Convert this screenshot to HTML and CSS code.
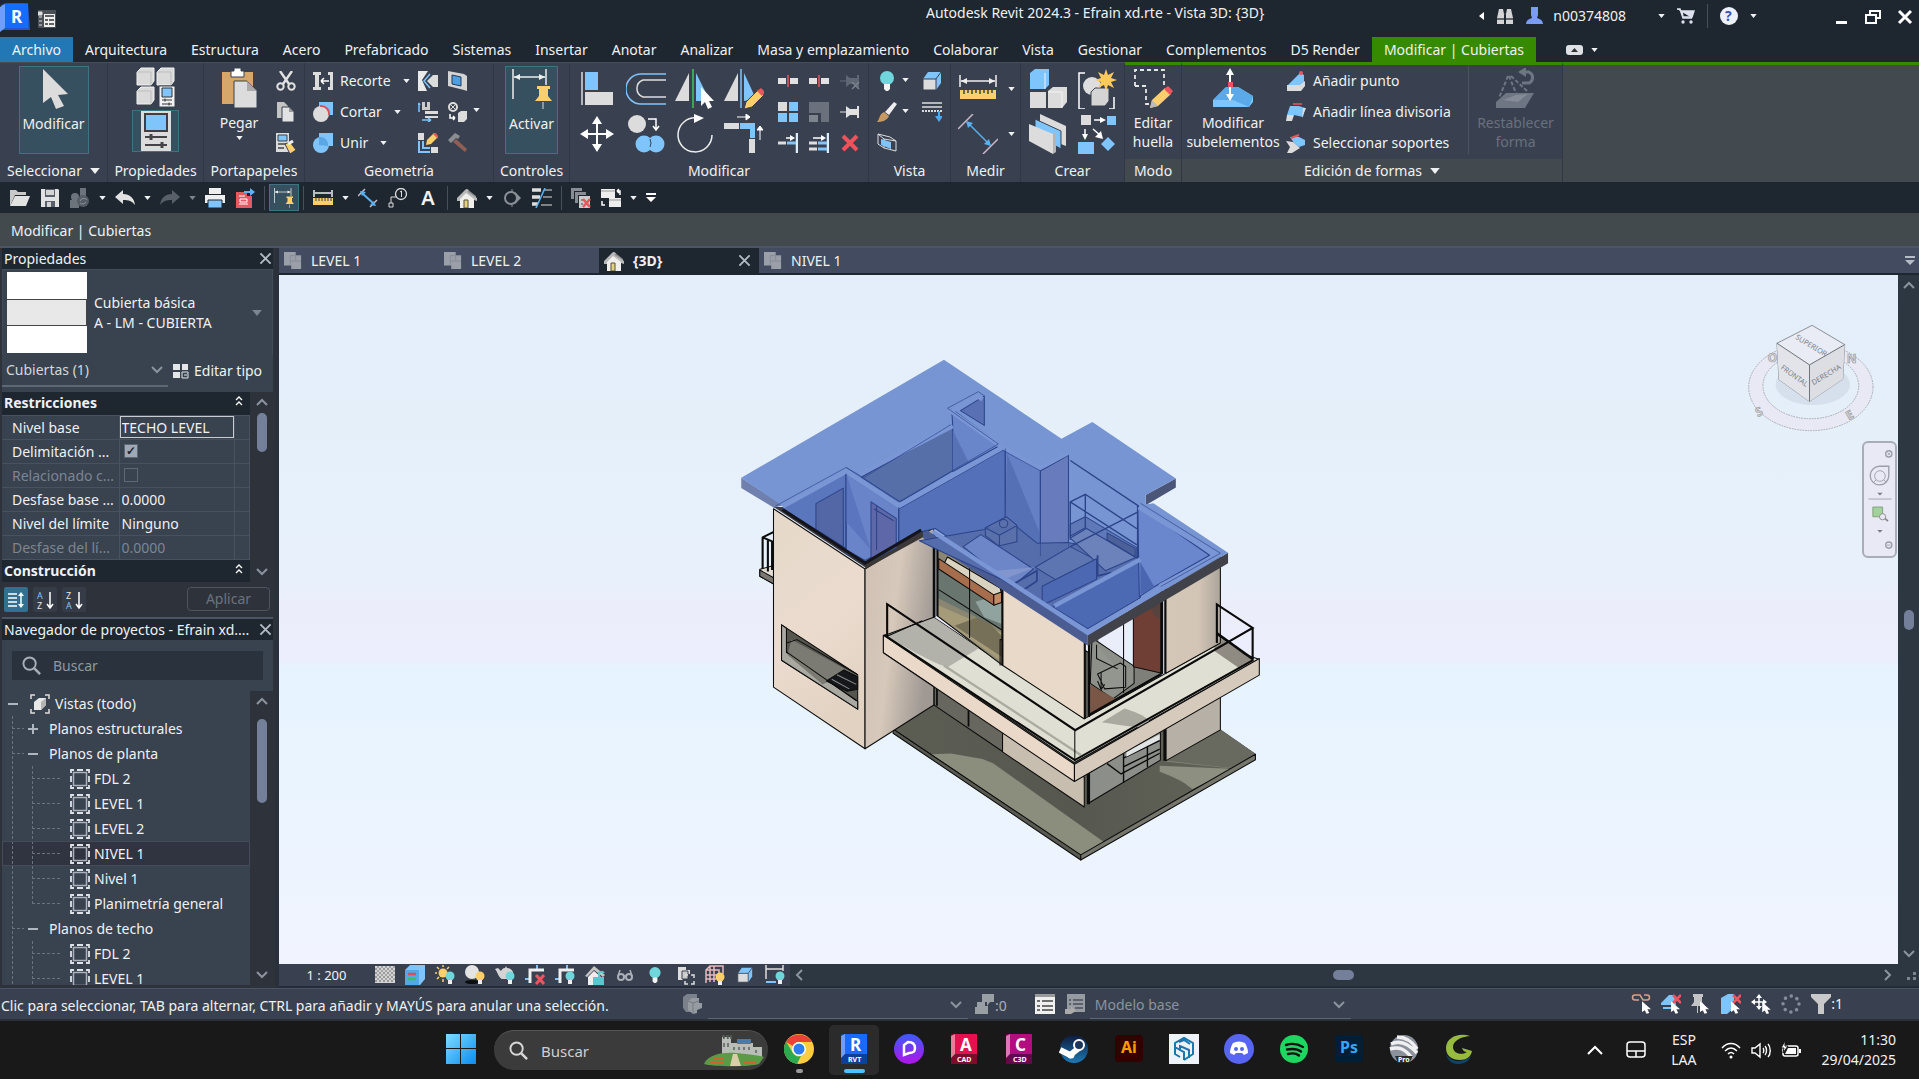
FILE: index.html
```html
<!DOCTYPE html>
<html lang="es">
<head>
    <meta charset="UTF-8">
    <meta name="viewport" content="width=device-width, initial-scale=1.0">
    <title>Autodesk Revit 2024.3 - Efrain xd.rte - Vista 3D: {3D}</title>
    <link rel="stylesheet" href="styles.css">
</head>
<body>
    <!-- Icon sprite -->
    <svg class="sprite" aria-hidden="true">
        <defs>
            <linearGradient id="winGrad" x1="0" y1="0" x2="1" y2="1"><stop offset="0" stop-color="#7fdcff"/><stop offset="1" stop-color="#0a8cf0"/></linearGradient>
            <linearGradient id="d5Grad" x1="0" y1="0" x2="0" y2="1"><stop offset="0" stop-color="#3b5bff"/><stop offset="1" stop-color="#b312e8"/></linearGradient>
            <linearGradient id="steamGrad" x1="0" y1="0" x2="0" y2="1"><stop offset="0" stop-color="#0e1a3c"/><stop offset="1" stop-color="#1c79b4"/></linearGradient>
            <symbol id="caret" viewBox="0 0 8 5"><path d="M0 0h8L4 5z" fill="currentColor"/></symbol>
            <symbol id="close" viewBox="0 0 14 14"><path d="M1.5 1.5l11 11M12.5 1.5l-11 11" stroke="currentColor" stroke-width="2" fill="none"/></symbol>
            <symbol id="chev-up" viewBox="0 0 12 8"><path d="M1 7l5-5 5 5" stroke="currentColor" stroke-width="2" fill="none"/></symbol>
            <symbol id="chev-down" viewBox="0 0 12 8"><path d="M1 1l5 5 5-5" stroke="currentColor" stroke-width="2" fill="none"/></symbol>
            <symbol id="chev-left" viewBox="0 0 8 12"><path d="M7 1L2 6l5 5" stroke="currentColor" stroke-width="2" fill="none"/></symbol>
            <symbol id="chev-right" viewBox="0 0 8 12"><path d="M1 1l5 5-5 5" stroke="currentColor" stroke-width="2" fill="none"/></symbol>
            <symbol id="dblchev" viewBox="0 0 8 10"><path d="M1 4l3-3 3 3M1 9l3-3 3 3" stroke="#fff" stroke-width="1.3" fill="none"/></symbol>
            <symbol id="magnifier" viewBox="0 0 20 20"><circle cx="8" cy="8" r="6.5" stroke="currentColor" stroke-width="2" fill="none"/><path d="M13 13l6 6" stroke="currentColor" stroke-width="2.6"/></symbol>

            <symbol id="arrow" viewBox="0 0 40 40"><path d="M9 0v34l8-6 5 12 8-3-6-11 10-1z" fill="#dcdcdc"/></symbol>
            <symbol id="types" viewBox="0 0 40 40"><g fill="#dadada" stroke="#f2f2f2" stroke-width="1"><path d="M1 5l4-4h13v13l-3 4H1zM21 5l4-4h13v13l-3 4H21zM1 24l4-4h13v13l-3 4H1z"/></g><path d="M15 5v13M1 5h14M35 5v13M21 5h14M15 24v13M1 24h14" stroke="#bdbdbd" fill="none"/><path d="M23 19h16v21H23z" fill="#f1f1f1" stroke="#394150"/><path d="M26 21h10v9H26z" fill="#7fc4fb" stroke="#333"/><path d="M26 33h10M26 37h10M29 31.500v3M33 35.500v3" stroke="#333"/></symbol>
            <symbol id="props" viewBox="0 0 40 40"><path d="M5 0h30v40H5z" fill="#dcdcdc"/><path d="M9 3h22v17H9z" fill="#7fc4fb" stroke="#394150" stroke-width="2"/><path d="M9 26h22M9 34h22" stroke="#444" stroke-width="2"/><path d="M15 23v6M26 31v6" stroke="#444" stroke-width="3"/></symbol>
            <symbol id="paste" viewBox="0 0 40 40"><path d="M3 4h31v32H3z" fill="#d5a76b"/><path d="M12 9V3h3V0h7v3h3v6z" fill="#fff" stroke="#394150"/><path d="M15 13h13l10 10v17H15z" fill="#dcdcdc" stroke="#394150"/><path d="M28 13v10h10z" fill="#aaa"/></symbol>
            <symbol id="cut" viewBox="0 0 20 20"><path d="M4 0l9 13M16 0L7 13" stroke="#e2e2e2" stroke-width="2.400"/><circle cx="4.500" cy="15.500" r="3.200" stroke="#e2e2e2" stroke-width="2" fill="none"/><circle cx="15.500" cy="15.500" r="3.200" stroke="#e2e2e2" stroke-width="2" fill="none"/></symbol>
            <symbol id="copy" viewBox="0 0 20 20"><path d="M1 0h7l4 4v12H1z" fill="#c4c4c4"/><path d="M6 5h7l5 5v10H6z" fill="#e2e2e2" stroke="#394150"/><path d="M13 5v5h5z" fill="#999"/></symbol>
            <symbol id="match" viewBox="0 0 20 20"><path d="M0 0h13v19H0z" fill="#dcdcdc"/><path d="M2 2h9v6H2z" fill="#7fc4fb" stroke="#394150"/><path d="M2 11h9M2 15h6" stroke="#444" stroke-width="1.500"/><path d="M9 11l5-2 6 8-6 4z" fill="#ffcf6b" stroke="#394150"/><path d="M12 11l5-3" stroke="#eee" stroke-width="3"/></symbol>
            <symbol id="cope" viewBox="0 0 20 20"><path d="M0 1h8v3H6v12h2v3H0v-3h2V4H0zM15 1h5v18h-5v-3h2V4h-2z" fill="#dcdcdc"/><path d="M8 10h8M8 10l3-3M8 10l3 3" stroke="#fff" stroke-width="1.500" fill="none"/></symbol>
            <symbol id="cutgeo" viewBox="0 0 20 20"><path d="M6 0h14v13H6z" fill="#7fc4fb"/><circle cx="8" cy="12" r="8" fill="#dcdcdc"/><path d="M7 4a8 8 0 0 1 9 9" stroke="#d9525c" stroke-width="2" fill="none"/></symbol>
            <symbol id="joingeo" viewBox="0 0 20 20"><path d="M6 0h14v13H6z" fill="#7fc4fb"/><circle cx="8" cy="12" r="8" fill="#7fc4fb"/><path d="M6 12V4a8 8 0 0 1 9 9z" fill="#5ba7e6"/></symbol>
            <symbol id="wallopen" viewBox="0 0 20 20"><path d="M0 0h10l-6 9 5 11H0z" fill="#eaeaea"/><path d="M9 10l6-6h5v12h-5z" fill="#dcdcdc"/><path d="M12 3L6 10l6 7" stroke="#7fc4fb" stroke-width="1.500" fill="none"/></symbol>
            <symbol id="face" viewBox="0 0 20 20"><path d="M0 0l16 3 3 2v15l-3-1L0 15z" fill="#d4d4d4"/><path d="M4 4l9 2v9l-9-2z" fill="#4d9fe0" stroke="#22395b"/></symbol>
            <symbol id="beam" viewBox="0 0 20 20"><path d="M4 0h3v5h2V0h3v8H4z" fill="#ccc"/><path d="M7 9h13v3H7zM7 14h13v2H7z" fill="#dcdcdc"/><path d="M1 1v9M1 1L0 3M1 1l1 2M4 18h9M13 18l-3-2M13 18l-3 2" stroke="#7fc4fb" stroke-width="1.500" fill="none"/></symbol>
            <symbol id="split" viewBox="0 0 20 20"><circle cx="5" cy="5" r="4" fill="none" stroke="#ddd" stroke-width="2"/><path d="M2 2l6 6M8 2L2 8" stroke="#ddd"/><path d="M10 11l3-2h6v8l-3 3h-6z" fill="#dcdcdc"/><path d="M2 12v4h5M7 16l-2-2M7 16l-2 2" stroke="#fff" stroke-width="1.500" fill="none"/></symbol>
            <symbol id="wallside" viewBox="0 0 20 20"><path d="M0 0h6v7H0zM13 14h7v6h-7z" fill="#ddd"/><path d="M1 8v11h11M5 8v7h7" stroke="#7fc4fb" stroke-width="2" fill="none"/><path d="M8 12l1-5 7-7 4 4-7 7z" fill="#ffcf6b"/><path d="M15 1l3-1 2 3-1 2z" fill="#e5565f"/></symbol>
            <symbol id="hammer" viewBox="0 0 20 20"><path d="M0 7l7-7 5 3-2 3-2-1-5 5z" fill="#8b8d93"/><path d="M8 6l11 10-2 3L5 9z" fill="#8f5e54"/></symbol>
            <symbol id="activate" viewBox="0 0 40 40"><path d="M1 0v30M34 0v16M2 8h31" stroke="#ececec" stroke-width="1.500"/><path d="M2 8l6-3v6zM33 8l-6-3v6z" fill="#eee"/><path d="M25 17h13v3h-2v7l4 5H23l4-5v-7h-2z" fill="#ffcf6b"/><path d="M31 33v7" stroke="#ddd"/></symbol>
            <symbol id="align" viewBox="0 0 40 40"><path d="M5 3v33" stroke="#ddd" stroke-width="1.500"/><path d="M8 3h13v18H8z" fill="#7fc4fb"/><path d="M8 23h28v13H8z" fill="#dcdcdc"/></symbol>
            <symbol id="offset" viewBox="0 0 40 40"><path d="M40 5H15a14 14 0 0 0 0 30h25" stroke="#7fc4fb" stroke-width="1.500" fill="none"/><path d="M40 11H17a9 9 0 0 0 0 17h23" stroke="#ddd" stroke-width="1.500" fill="none"/></symbol>
            <symbol id="mirror" viewBox="0 0 40 40"><path d="M0 32L14 4v28z" fill="#dcdcdc"/><path d="M18 0v39" stroke="#35a853" stroke-width="2"/><path d="M21 4l14 28H21z" fill="#7fc4fb"/><path d="M26 18v19l4-4 3 7 4-2-3-6h5z" fill="#fff"/></symbol>
            <symbol id="mirrordraw" viewBox="0 0 40 40"><path d="M0 32L14 4v28z" fill="#dcdcdc"/><path d="M17 0v39" stroke="#7fc4fb" stroke-width="1.500"/><path d="M20 4l12 26-12 2z" fill="#7fc4fb"/><path d="M20 40l2-7 12-12 6 5-12 12z" fill="#ffcf6b" stroke="#394150"/><path d="M33 22l4-3 4 4-3 4z" fill="#ec5560"/></symbol>
            <symbol id="move" viewBox="0 0 40 40"><path d="M20 7v26M7 20h26" stroke="#fff" stroke-width="2"/><path d="M20 2l-5 8h10zM20 38l-5-8h10zM3 20l8-5v10zM37 20l-8-5v10z" fill="#fff"/></symbol>
            <symbol id="copyel" viewBox="0 0 40 40"><circle cx="11" cy="10" r="9" fill="#dcdcdc"/><circle cx="18" cy="30" r="8.500" fill="#7fc4fb"/><circle cx="30" cy="30" r="8.500" fill="#7fc4fb"/><path d="M24 33a9 9 0 0 0 0-8" stroke="#394150" fill="none"/><path d="M22 5h8v10M27 12l3 4 3-4" stroke="#fff" stroke-width="1.500" fill="none"/></symbol>
            <symbol id="rotate" viewBox="0 0 40 40"><path d="M22 4A17 17 0 1 0 37 21" stroke="#eee" stroke-width="1.500" fill="none"/><path d="M19 0l10 4-10 5z" fill="#fff"/></symbol>
            <symbol id="trim" viewBox="0 0 40 40"><path d="M0 9h15v6H0zM25 25h6v14h-6z" fill="#dcdcdc"/><path d="M16 9h15v15h-5v-9H16z" fill="#7fc4fb"/><path d="M13 3h13M26 3l-4-3v6zM36 26V14M36 12l-3 4h6z" stroke="#fff" fill="#fff"/></symbol>
            <symbol id="splitel" viewBox="0 0 20 20"><path d="M0 7h8v6H0zM12 7h8v6h-8z" fill="#e2e2e2"/><path d="M10 4v12" stroke="#ec5560" stroke-width="1.500"/></symbol>
            <symbol id="unpin" viewBox="0 0 20 20"><path d="M0 10h6" stroke="#68707d"/><path d="M6 4l4 3h7V4h2v12h-2v-3h-7l-4 3z" fill="#5f6775"/><path d="M12 11l7 7M19 11l-7 7" stroke="#7b838f" stroke-width="1.500"/></symbol>
            <symbol id="array" viewBox="0 0 20 20"><path d="M0 0h9v9H0z" fill="#dcdcdc"/><path d="M11 0h9v9h-9zM0 11h9v9H0zM11 11h9v9h-9z" fill="#7fc4fb"/></symbol>
            <symbol id="scale" viewBox="0 0 20 20"><path d="M0 0h20v20h-8v-9H0z" fill="#6a717d"/><path d="M0 13h9v7H0z" fill="#7e858f"/></symbol>
            <symbol id="pin" viewBox="0 0 20 20"><path d="M0 10h7" stroke="#ddd"/><path d="M6 4l4 3h7V4h2v12h-2v-3h-7l-4 3z" fill="#e2e2e2"/></symbol>
            <symbol id="extend" viewBox="0 0 20 20"><path d="M19 0v20" stroke="#dcecfb" stroke-width="2.500"/><path d="M0 10h8" stroke="#ddd" stroke-width="3"/><path d="M9 10h9" stroke="#7fc4fb" stroke-width="3"/><path d="M8 5h5" stroke="#fff" stroke-width="1.500"/><path d="M12 2l5 3-5 3z" fill="#fff"/></symbol>
            <symbol id="extendm" viewBox="0 0 20 20"><path d="M19 0v20" stroke="#dcecfb" stroke-width="2.500"/><path d="M0 10h8M0 16h8" stroke="#ddd" stroke-width="3"/><path d="M9 10h9M9 16h9" stroke="#7fc4fb" stroke-width="3"/><path d="M4 5h9" stroke="#fff" stroke-width="1.500"/><path d="M12 2l5 3-5 3z" fill="#fff"/></symbol>
            <symbol id="delete" viewBox="0 0 20 20"><path d="M3 3l14 14M17 3L3 17" stroke="#f0525c" stroke-width="4"/></symbol>
            <symbol id="bulb" viewBox="0 0 20 20"><circle cx="10" cy="7" r="7" fill="#6fd6dc"/><path d="M7 13h6v5l-2 2H9l-2-2z" fill="#f3f3f3"/></symbol>
            <symbol id="cube" viewBox="0 0 20 20"><path d="M1 8l5-7h13v11l-5 7z" fill="#7fc4fb"/><path d="M1 8h13v11H1z" fill="#dcdcdc" stroke="#394150"/><path d="M14 8l5-7" stroke="#394150"/></symbol>
            <symbol id="brush" viewBox="0 0 20 20"><path d="M8 10l9-10 3 2-8 11z" fill="#eee"/><path d="M7 10l5 4c-2 5-8 6-12 6 3-3 2-8 7-10z" fill="#c79a62"/></symbol>
            <symbol id="linew" viewBox="0 0 20 20"><path d="M0 1h20M0 5h20" stroke="#ddd" stroke-width="1.500"/><path d="M0 9h20" stroke="#ddd" stroke-width="2" stroke-dasharray="2 1"/><path d="M17 9v8" stroke="#4eaaf0" stroke-width="2"/><path d="M13 14h8l-4 6z" fill="#4eaaf0"/></symbol>
            <symbol id="selbox" viewBox="0 0 20 20"><path d="M1 1l12 3 6 4v10l-12-3-6-4zM1 1l6 5 12 2M7 6v9" stroke="#ddd" fill="none"/><path d="M4 6l10 3v7L4 12z" fill="#7fc4fb"/></symbol>
            <symbol id="measure" viewBox="0 0 40 40"><path d="M2 6v12M38 6v12M3 12h34" stroke="#eee" stroke-width="1.500"/><path d="M3 12l6-3v6zM37 12l-6-3v6z" fill="#eee"/><path d="M2 21h36v9H2z" fill="#ffcf6b"/><path d="M6 21v4M10 21v3M14 21v4M18 21v3M22 21v4M26 21v3M30 21v4M34 21v3" stroke="#394150" stroke-width="1.500"/></symbol>
            <symbol id="dimal" viewBox="0 0 40 40"><path d="M0 15L15 0M25 40l15-15" stroke="#c9b9c6" stroke-width="1.500"/><path d="M9 8l23 23" stroke="#59b1f2" stroke-width="1.500"/><path d="M8 7l7 2-5 5zM33 32l-7-2 5-5z" fill="#59b1f2"/></symbol>
            <symbol id="dims" viewBox="0 0 20 20"><path d="M0 8l7-7M12 19l7-7" stroke="#c9b9c6" stroke-width="1.500"/><path d="M4 5l12 11" stroke="#59b1f2" stroke-width="2"/><path d="M2 3l6 1-4 4zM18 18l-6-1 4-4z" fill="#59b1f2"/></symbol>
            <symbol id="ruler" viewBox="0 0 20 20"><path d="M1 2v7M19 2v7M2 5h16" stroke="#eee" stroke-width="1.500"/><path d="M0 10h20v7H0z" fill="#ffcf6b"/><path d="M3 10v3M6 10v3M9 10v3M12 10v3M15 10v3M18 10v3" stroke="#394150"/></symbol>
            <symbol id="parts" viewBox="0 0 40 40"><path d="M2 4l5-4h14v16l-4 4H2z" fill="#7fc4fb"/><path d="M2 23h16v16H2z" fill="#dcdcdc"/><path d="M20 22l5-4h14v15l-5 6H20z" fill="#dcdcdc"/><path d="M17 4v16M34 23v16M20 23h14" stroke="#f4f4f4"/></symbol>
            <symbol id="group" viewBox="0 0 40 40"><path d="M8 4H2v36h6M32 40h5V28" stroke="#fff" stroke-width="1.500" fill="none"/><circle cx="15" cy="17" r="9" fill="#dedede"/><path d="M14 23l4-4h14v13l-4 5H14z" fill="#d4d4d4" stroke="#394150"/><path d="M29 0l2 6 6-3-3 6 6 2-6 2 3 6-6-3-2 6-2-6-6 3 3-6-6-2 6-2-3-6 6 3z" fill="#ffc95c"/></symbol>
            <symbol id="panels" viewBox="0 0 40 40"><path d="M12 0l26 12v20L12 22z" fill="#dcdcdc"/><path d="M7 5l26 12v18L7 20z" fill="#7fc4fb" stroke="#394150"/><path d="M1 10l24 10v20L1 27z" fill="#dcdcdc"/><path d="M25 20l3-2v20l-3 2z" fill="#b5b5b5"/></symbol>
            <symbol id="families" viewBox="0 0 40 40"><path d="M4 1h10v10H4z" fill="#dcdcdc"/><path d="M30 2h9v9h-9zM1 28h16v12H1z" fill="#7fc4fb"/><path d="M31 23l7 7-7 7-7-7z" fill="#7fc4fb"/><path d="M17 6h8M8 15v7M16 15l8 7" stroke="#fff" stroke-width="1.500"/><path d="M23 3l6 3-6 3zM5 20l3 6 3-6zM24 17l2 8-8-2z" fill="#fff"/></symbol>
            <symbol id="editfoot" viewBox="0 0 40 40"><path d="M2 18V2h29v16M2 18h11v18h4" stroke="#e6e6e6" stroke-width="1.800" stroke-dasharray="4 3" fill="none"/><path d="M17 40l2-8 13-12 6 6-13 12z" fill="#ffcf6b"/><path d="M17 40l2-8 6 6z" fill="#bbb"/><path d="M31 21l4-3 5 5-3 4z" fill="#ec5560"/></symbol>
            <symbol id="modsub" viewBox="0 0 40 40"><path d="M0 39v-7l13-13h12l15 9v6l-4 5z" fill="#7fc4fb"/><path d="M0 32l13-13h12l-5 13zM20 32l5-13 15 9-4 11" fill="#5ba9e8"/><path d="M17 4v28" stroke="#fff" stroke-width="2"/><path d="M17 0l-4 7h8zM17 33l-4-7h8z" fill="#fff"/><path d="M15 14h5v5h-5z" fill="#ec5560"/></symbol>
            <symbol id="addpt" viewBox="0 0 20 20"><path d="M2 14L14 2l4 2v9l-3 4z" fill="#7fc4fb"/><path d="M1 14h13l5-4v5l-4 5H1z" fill="#dcdcdc"/><circle cx="15" cy="2" r="2" fill="#ec5560"/></symbol>
            <symbol id="addline" viewBox="0 0 20 20"><path d="M4 4h9l-5 9H1zM13 4l6 2-2 9-9-2z" fill="#7fc4fb"/><path d="M1 13h7l-2 6H0zM17 6h3l-4 10z" fill="#dcdcdc"/><path d="M7 2h9" stroke="#ec5560" stroke-width="1.500"/></symbol>
            <symbol id="picksup" viewBox="0 0 20 20"><path d="M4 4h9l6 3v5l-6 2-5-4z" fill="#7fc4fb"/><path d="M0 8l7 1 7 6-8 5H1l3-6z" fill="#dcdcdc"/><path d="M5 5l8-3" stroke="#ec5560" stroke-width="2"/></symbol>
            <symbol id="reset" viewBox="0 0 40 40"><g fill="#6e7583"><path d="M0 34l10-9h28l-9 15H0z"/><path d="M22 4l8-5v10z"/></g><path d="M28 4h5a6 6 0 0 1 0 11h-7" stroke="#6e7583" stroke-width="3" fill="none"/><path d="M12 8L3 30M13 8l7 17M15 8l17 16" stroke="#6e7583" stroke-width="2" stroke-dasharray="4 2"/><path d="M7 32l13-5 12-1-10 8z" fill="#858b97"/></symbol>

            <symbol id="open" viewBox="0 0 20 20"><path d="M0 18V2h6l2 2h8v3H5z" fill="#c9c9c9"/><path d="M0 18L5 8h15l-4 10z" fill="#e2e2e2"/></symbol>
            <symbol id="save" viewBox="0 0 20 20"><path d="M1 1h17l1 1v17H1z" fill="#e2e2e2"/><path d="M5 1h10v8H5zM5 13h10v6H5z" fill="#59606b"/><path d="M6 2h8v5H6zM7 14h4v5H7z" fill="#d4d4d4"/></symbol>
            <symbol id="sync" viewBox="0 0 20 20"><circle cx="5" cy="9" r="4" fill="#6d737b"/><path d="M0 12h9v8H0zM10 0h6v10h-6z" fill="#6d737b"/><circle cx="13" cy="13" r="6" fill="#565c65"/><path d="M10 13a4 4 0 0 1 7-1M16 14a4 4 0 0 1-6 1" stroke="#8d9299" fill="none"/></symbol>
            <symbol id="undo" viewBox="0 0 20 20"><path d="M0 9l8-7v4c7 0 11 4 12 11-3-4-6-5-12-5v4z" fill="#e2e2e2"/></symbol>
            <symbol id="redo" viewBox="0 0 20 20"><path d="M20 9l-8-7v4C5 6 1 10 0 17c3-4 6-5 12-5v4z" fill="#585f68"/></symbol>
            <symbol id="print" viewBox="0 0 20 20"><path d="M4 0h12v6H4zM0 7h20v8H0z" fill="#eee"/><path d="M3 12h14v8H3z" fill="#7fc4fb" stroke="#1e2730"/></symbol>
            <symbol id="pdf" viewBox="0 0 20 20"><path d="M1 4h11v4h5v12H1z" fill="#e35a64"/><path d="M4 8h6M4 16h9M5 11h7v3H5z" stroke="#fff" fill="none"/><path d="M9 3h6V0l5 4-5 4V5H9z" fill="#5bb4f3"/></symbol>
            <symbol id="tag" viewBox="0 0 20 20"><circle cx="13" cy="6" r="5.500" stroke="#ddd" stroke-width="1.300" fill="none"/><path d="M12 4l1.500-1v6" stroke="#ddd" fill="none"/><path d="M8 9H3v6" stroke="#ddd" fill="none"/><path d="M1 15h4v4H1z" stroke="#ddd" fill="none"/></symbol>
            <symbol id="home" viewBox="0 0 20 20"><path d="M3 9l7-8 9 7v4z" fill="#8f8f8f"/><path d="M0 10L9 1l3 1-9 11H0zM9 3l11 7v3l-3-1-8-6z" fill="#b9b9b9"/><path d="M3 11l6-6 8 6v9H3z" fill="#f0efec"/><path d="M7 12h4v8H7z" fill="#e5d27c" stroke="#55503c"/></symbol>
            <symbol id="section" viewBox="0 0 20 20"><path d="M10 1v18" stroke="#8b9097"/><path d="M13 4l6 6-6 6z" fill="#8b9097"/><circle cx="9" cy="10" r="6" fill="#1e2730" stroke="#8b9097" stroke-width="2"/></symbol>
            <symbol id="thin" viewBox="0 0 20 20"><path d="M0 2h9M0 9h8M0 16h6" stroke="#ddd" stroke-width="3.500"/><path d="M12 2h8M11 9h9M9 17h11" stroke="#ddd"/><path d="M13 0L4 20" stroke="#5bb4f3" stroke-width="1.500"/></symbol>
            <symbol id="closeh" viewBox="0 0 20 20"><path d="M0 0h11v3H3v8H0zM4 4h11v3H7v8H4z" fill="#888d93"/><path d="M8 8h11v12H8z" fill="#ccc"/><path d="M10 12h4M10 16h2" stroke="#444"/><path d="M12 11l7 8M19 11l-7 8" stroke="#ec5560" stroke-width="2.500"/></symbol>
            <symbol id="windows" viewBox="0 0 20 20"><path d="M0 1h14v9H0zM8 10h12v9H8z" fill="#eee"/><path d="M0 3h14M8 12h12" stroke="#999"/><path d="M16 3h3v4M4 17H1v-4M16 3l2-2M16 3l2 2" stroke="#fff" stroke-width="1.500" fill="none"/></symbol>
            <symbol id="plan" viewBox="0 0 20 20"><path d="M0 0h13v4h6v15H8v-4H0z" fill="#9a9fa8"/><path d="M7 4h12M13 4v6h6M7 4v11M7 10h6" stroke="#858b96" fill="none"/></symbol>
            <symbol id="planview" viewBox="0 0 20 20"><path d="M1 4V1h3M7 1h6M16 1h3v3M19 7v6M19 16v3h-3M13 19H7M4 19H1v-3M1 13V7" stroke="#dfe3e8" stroke-width="1.800" fill="none"/><path d="M3.500 3.500h13v13h-13z" stroke="#aab1bb" stroke-width="1.500" fill="none"/></symbol>
            <symbol id="viewroot" viewBox="0 0 20 20"><path d="M1 5V1h4M15 1h4v4M19 15v4h-4M5 19H1v-4" stroke="#ddd" stroke-width="1.500" fill="none"/><path d="M4 8l5-4h7v7l-5 5H4z" fill="#e8e8e8"/><path d="M16 4v7l-5 5V8z" fill="#b4b4b4"/></symbol>

            <symbol id="check" viewBox="0 0 20 20"><path d="M0 1h20v17H0z" fill="#d4d4d4"/><path d="M0 4h20M0 8h20M0 12h20M0 16h20" stroke="#9a9a9a" stroke-width="2" stroke-dasharray="2 2"/><path d="M2 2h18M2 6h18M2 10h18M2 14h18" stroke="#a4a4a4" stroke-width="2" stroke-dasharray="2 2"/></symbol>
            <symbol id="style" viewBox="0 0 20 20"><path d="M0 5l5-5h15v14l-5 6H0z" fill="#7fc4fb"/><path d="M0 5h14v15H0z" fill="#52a9e8"/><path d="M3 9h8" stroke="#e04b55" stroke-width="2.500"/><path d="M3 14h8" stroke="#3dbb68" stroke-width="2.500"/></symbol>
            <symbol id="sun" viewBox="0 0 20 20"><circle cx="8" cy="8" r="4.500" fill="#ffcf6b"/><path d="M8 0v2M8 14v3M0 8h2M2 2l2 2M12 4l2-2M2 14l2-2" stroke="#ffcf6b" stroke-width="1.500"/><circle cx="15" cy="11" r="4.500" fill="#6fd6dc"/><path d="M13 15h4v4h-4z" fill="#eee"/></symbol>
            <symbol id="shadow" viewBox="0 0 20 20"><ellipse cx="7" cy="17" rx="7" ry="2" fill="#0b0d10"/><circle cx="7" cy="7" r="7" fill="#e4e4e4"/><circle cx="15" cy="11" r="4.500" fill="#ffcf6b"/><path d="M13 15h4v4h-4z" fill="#eee"/></symbol>
            <symbol id="teapot" viewBox="0 0 20 20"><path d="M0 4l3-1 3 3c1-2 2-3 4-3l1-2 1 2c3 0 5 2 6 4v7H7C4 13 3 8 0 4z" fill="#d4d4d4"/><circle cx="15" cy="11" r="4.500" fill="#6fd6dc"/><path d="M13 15h4v4h-4z" fill="#eee"/></symbol>
            <symbol id="cropx" viewBox="0 0 20 20"><path d="M0 14h4M12 4V0" stroke="#7fc4fb" stroke-width="2" fill="none"/><path d="M5 18V5h14" stroke="#eee" stroke-width="3" fill="none"/><path d="M11 10l8 9M19 10l-8 9" stroke="#ec5560" stroke-width="3"/></symbol>
            <symbol id="cropb" viewBox="0 0 20 20"><path d="M0 14h4M12 4V0" stroke="#7fc4fb" stroke-width="2"/><path d="M5 18V5h14" stroke="#eee" stroke-width="3" fill="none"/><circle cx="15" cy="11" r="4.500" fill="#6fd6dc"/><path d="M13 15h4v4h-4z" fill="#eee"/></symbol>
            <symbol id="lockview" viewBox="0 0 20 20"><path d="M0 11L9 1l11 9-2 2-9-7-7 7z" fill="#c4c4c4"/><path d="M3 12l6-6 7 6v8H3z" fill="#eee"/><path d="M8 12h11v8H8z" fill="#5cc6cf"/><path d="M14 12V8a3 3 0 0 1 5 0" stroke="#5cc6cf" stroke-width="2" fill="none"/></symbol>
            <symbol id="glasses" viewBox="0 0 20 20"><circle cx="6" cy="12" r="3" stroke="#aab0b8" stroke-width="2" fill="none"/><circle cx="14" cy="12" r="3" stroke="#aab0b8" stroke-width="2" fill="none"/><path d="M3 11l2-6M17 11l-2-6M9 11h2" stroke="#aab0b8" stroke-width="1.500"/></symbol>
            <symbol id="tempprop" viewBox="0 0 20 20"><path d="M3 2h8v3h4v4H8v6H3z" fill="#ddd"/><path d="M7 6h6v8H7z" fill="#ccc" stroke="#394150"/><path d="M10 10h3M16 10h3v3M19 16v3h-3M13 19h-3v-3" stroke="#ddd" stroke-width="1.500" fill="none"/></symbol>
            <symbol id="analytic" viewBox="0 0 20 20"><path d="M1 18V5l4-4h13v8M1 5h13v8M5 1v16M9 1v16M1 10h13M1 14h10" stroke="#e8b8bc" stroke-width="1.500" fill="none"/><circle cx="15" cy="12" r="4.500" fill="#ffcf6b"/><path d="M13 16h4v4h-4z" fill="#eee"/></symbol>
            <symbol id="dimb" viewBox="0 0 20 20"><path d="M1 0v14M18 0v6M1 4h17" stroke="#ddd" stroke-width="1.500"/><path d="M1 17h10" stroke="#7fc4fb" stroke-width="2"/><circle cx="15" cy="11" r="4.500" fill="#6fd6dc"/><path d="M13 15h4v4h-4z" fill="#eee"/></symbol>
            <symbol id="worksets" viewBox="0 0 20 20"><path d="M1 3l4-3h10v12l-6 6H4L1 14z" fill="#7c828b"/><path d="M6 7l4-3h7v5h3v5l-5 2v3l-4 1-5-4z" fill="#969ba2"/><path d="M11 9v11M6 7l5 2 6-2" stroke="#747a84" fill="none"/></symbol>
            <symbol id="editreq" viewBox="0 0 20 20"><path d="M7 0h12v8h-4l-3 4V8H7zM2 8h8v4h3v8H0v-7h2z" fill="#9a9fa6"/></symbol>
            <symbol id="listw" viewBox="0 0 20 20"><path d="M0 0h20v20H0z" fill="#f0f0f0"/><path d="M0 0h20v3H0z" fill="#9a9a9a"/><path d="M2 7h3M7 7h11M2 12h3M7 12h11M2 16h3M7 16h11" stroke="#444" stroke-width="1.500"/></symbol>
            <symbol id="listg" viewBox="0 0 20 20"><path d="M2 0h18v18H2z" fill="#969ba2"/><path d="M4 6h2M8 6h10M4 10h2M8 10h10M10 14h8" stroke="#4a505a" stroke-width="1.500"/><path d="M0 15h6v-3l5 5-5 3H0z" fill="#aaa"/></symbol>
            <symbol id="cursor" viewBox="0 0 10 14"><path d="M0 0v12l3-2 2 4 3-1-2-4h4z" fill="#fff"/></symbol>
            <symbol id="sel-link" viewBox="0 0 20 20"><path d="M8 6H4a2.500 2.500 0 0 1 0-5h5l3 5h4a2.500 2.500 0 0 0 0-5h-3" stroke="#d8a08a" stroke-width="1.500" fill="none"/><use href="#cursor" x="11" y="7" width="9" height="13"/></symbol>
            <symbol id="sel-under" viewBox="0 0 20 20"><path d="M0 9l8-8h5l2 10H0zM2 13h9v2H2z" fill="#7fc4fb"/><path d="M12 1l8 8M20 1l-8 8" stroke="#ec5560" stroke-width="2.500"/><use href="#cursor" x="10" y="7" width="9" height="13"/></symbol>
            <symbol id="sel-pin" viewBox="0 0 20 20"><path d="M2 0h10v3h-1v5l3 4H0l3-4V3H2zM6 12h1v7H6z" fill="#c4c4c4"/><use href="#cursor" x="9" y="7" width="9" height="13"/></symbol>
            <symbol id="sel-face" viewBox="0 0 20 20"><path d="M0 4l7-4h6v14l-7 6H0z" fill="#7fc4fb"/><path d="M12 1l8 8M20 1l-8 8" stroke="#ec5560" stroke-width="2.500"/><use href="#cursor" x="10" y="7" width="9" height="13"/></symbol>
            <symbol id="sel-drag" viewBox="0 0 20 20"><path d="M8 2v13M1 8h13" stroke="#fff" stroke-width="1.500"/><path d="M8 0L5 4h6zM8 16l-3-4h6zM0 8l4-3v6zM16 8l-4-3v6z" fill="#fff"/><use href="#cursor" x="11" y="8" width="9" height="12"/></symbol>
            <symbol id="progress" viewBox="0 0 20 20"><circle cx="10" cy="10" r="8" stroke="#858d99" stroke-width="3.500" stroke-dasharray="0.100 6.180" stroke-linecap="round" fill="none"/></symbol>
            <symbol id="funnel" viewBox="0 0 20 20"><path d="M0 0h20v3l-7 7v10H7V10L0 3z" fill="#c9c9c9"/></symbol>
        </defs>
    </svg>

    <header class="titlebar">
        <svg class="applogo" viewBox="0 0 30 30"><path d="M1 2l5-2h22l2 27H1z" fill="#2457c9"/><path d="M5 1h23v24H5z" fill="#176bff"/><path d="M0 4l5-3v24l-5 4z" fill="#6f9dfc"/><text x="11" y="20" class="logo-letter">R</text></svg>
        <svg class="i18" viewBox="0 0 18 18"><path d="M0 0h18v18H0z" fill="#4a4f56"/><path d="M0 2h4v3H0zM1 7h3M1 11h3M1 15h3" fill="#ddd" stroke="#ddd"/><path d="M6 4h11v13H6z" fill="#eee"/><path d="M7 6h9M7 10h3M11 10h5M7 14h3M11 14h5" stroke="#333" stroke-width="1.500"/></svg>
        <h1>Autodesk Revit 2024.3 - Efrain xd.rte - Vista 3D: {3D}</h1>
        <div class="account">
            <svg class="back" viewBox="0 0 5 8"><path d="M5 0v8L0 4z" fill="#fff"/></svg>
            <svg class="i18" viewBox="0 0 18 18"><path d="M3 2h4l1 5v10H1v-6zM11 2h4l2 9v6h-7V7z" fill="#d4d4d4"/><path d="M1 12h7M10 12h7M8 7h2" stroke="#3b424b" stroke-width="1.500"/></svg>
            <svg class="i18" viewBox="0 0 18 18"><path d="M5 0h7v8l-1 3c4 1 6 3 6 6H0c0-3 2-5 6-6L5 8z" fill="#7b9cf5"/></svg>
            <span class="user">n00374808</span>
            <svg class="car"><use href="#caret"/></svg>
            <svg class="i18" viewBox="0 0 18 16"><path d="M0 1h3l3 9h9M5 3h12l-2 6H6z" fill="#dde1ef" stroke="#dde1ef" stroke-width="1.500"/><circle cx="6" cy="14" r="1.700" fill="#dde1ef"/><circle cx="14" cy="14" r="1.700" fill="#dde1ef"/></svg>
            <span class="vsep"></span>
            <svg class="i18" viewBox="0 0 18 18"><circle cx="9" cy="9" r="9" fill="#eef1fb"/><text x="5" y="14" class="help-mark">?</text></svg>
            <svg class="car"><use href="#caret"/></svg>
        </div>
        <div class="winbtns">
            <button aria-label="Minimizar"><svg viewBox="0 0 16 16"><path d="M3 12h11v3H3z" fill="#fff"/></svg></button>
            <button aria-label="Restaurar"><svg viewBox="0 0 16 16"><path d="M5 6V2h10v7h-4M1 6h10v8H1z" stroke="#fff" stroke-width="2" fill="none"/></svg></button>
            <button aria-label="Cerrar"><svg viewBox="0 0 16 16"><path d="M2 2l12 12M14 2L2 14" stroke="#fff" stroke-width="3"/></svg></button>
        </div>
    </header>

    <nav class="tabs">
        <a class="file" href="#archivo">Archivo</a>
        <a href="#arquitectura">Arquitectura</a>
        <a href="#estructura">Estructura</a>
        <a href="#acero">Acero</a>
        <a href="#prefabricado">Prefabricado</a>
        <a href="#sistemas">Sistemas</a>
        <a href="#insertar">Insertar</a>
        <a href="#anotar">Anotar</a>
        <a href="#analizar">Analizar</a>
        <a href="#masa">Masa y emplazamiento</a>
        <a href="#colaborar">Colaborar</a>
        <a href="#vista">Vista</a>
        <a href="#gestionar">Gestionar</a>
        <a href="#complementos">Complementos</a>
        <a href="#d5">D5 Render</a>
        <a class="context" href="#modificar">Modificar | Cubiertas</a>
        <button class="collapse" aria-label="Minimizar cinta"><svg viewBox="0 0 17 10"><rect width="17" height="10" rx="3" fill="#dfe1e4"/><path d="M5 7h7L8.500 3z" fill="#333"/></svg><svg class="car"><use href="#caret"/></svg></button>
    </nav>

    <div class="ribbon">
        <section class="panel w-select">
            <div class="body center"><button class="big on"><svg class="i40"><use href="#arrow"/></svg><span>Modificar</span></button></div>
            <h2>Seleccionar <svg class="car2"><use href="#caret"/></svg></h2>
        </section>
        <section class="panel w-props">
            <div class="body stack">
                <button aria-label="Propiedades de tipo"><svg class="i40"><use href="#types"/></svg></button>
                <button class="on wide" aria-label="Propiedades"><svg class="i40"><use href="#props"/></svg></button>
            </div>
            <h2>Propiedades</h2>
        </section>
        <section class="panel w-clip">
            <div class="body">
                <button class="big"><svg class="i40"><use href="#paste"/></svg><span>Pegar</span><svg class="car"><use href="#caret"/></svg></button>
                <div class="col">
                    <button aria-label="Cortar"><svg class="i20"><use href="#cut"/></svg></button>
                    <button aria-label="Copiar"><svg class="i20"><use href="#copy"/></svg></button>
                    <button aria-label="Igualar tipo"><svg class="i20"><use href="#match"/></svg></button>
                </div>
            </div>
            <h2>Portapapeles</h2>
        </section>
        <section class="panel w-geo">
            <div class="body">
                <div class="col list">
                    <button><svg class="i20"><use href="#cope"/></svg>Recorte<svg class="car"><use href="#caret"/></svg></button>
                    <button><svg class="i20"><use href="#cutgeo"/></svg>Cortar<svg class="car"><use href="#caret"/></svg></button>
                    <button><svg class="i20"><use href="#joingeo"/></svg>Unir<svg class="car"><use href="#caret"/></svg></button>
                </div>
                <div class="col">
                    <button aria-label="Uniones de muro"><svg class="i20"><use href="#wallopen"/></svg></button>
                    <button aria-label="Uniones de vigas"><svg class="i20"><use href="#beam"/></svg></button>
                    <button aria-label="Perfil de corte"><svg class="i20"><use href="#wallside"/></svg></button>
                </div>
                <div class="col">
                    <button aria-label="Dividir cara"><svg class="i20"><use href="#face"/></svg></button>
                    <button aria-label="Pintar"><svg class="i20"><use href="#split"/></svg></button>
                    <button aria-label="Derribar"><svg class="i20"><use href="#hammer"/></svg></button>
                </div>
                <svg class="car midrow"><use href="#caret"/></svg>
            </div>
            <h2>Geometría</h2>
        </section>
        <section class="panel w-ctrl">
            <div class="body center"><button class="big on narrow"><svg class="i40"><use href="#activate"/></svg><span>Activar</span></button></div>
            <h2>Controles</h2>
        </section>
        <section class="panel w-mod">
            <div class="body">
                <div class="grid-big">
                    <button aria-label="Alinear"><svg class="i40"><use href="#align"/></svg></button>
                    <button aria-label="Desfase"><svg class="i40"><use href="#offset"/></svg></button>
                    <button aria-label="Reflejar eje"><svg class="i40"><use href="#mirror"/></svg></button>
                    <button aria-label="Reflejar dibujar"><svg class="i40"><use href="#mirrordraw"/></svg></button>
                    <button aria-label="Desplazar"><svg class="i40"><use href="#move"/></svg></button>
                    <button aria-label="Copiar"><svg class="i40"><use href="#copyel"/></svg></button>
                    <button aria-label="Rotar"><svg class="i40"><use href="#rotate"/></svg></button>
                    <button aria-label="Recortar"><svg class="i40"><use href="#trim"/></svg></button>
                </div>
                <div class="grid-small">
                    <button aria-label="Dividir"><svg class="i20"><use href="#splitel"/></svg></button>
                    <button aria-label="Dividir con separación"><svg class="i20"><use href="#splitel"/></svg></button>
                    <button aria-label="Desbloquear"><svg class="i20"><use href="#unpin"/></svg></button>
                    <button aria-label="Matriz"><svg class="i20"><use href="#array"/></svg></button>
                    <button aria-label="Escala"><svg class="i20"><use href="#scale"/></svg></button>
                    <button aria-label="Bloquear"><svg class="i20"><use href="#pin"/></svg></button>
                    <button aria-label="Alargar"><svg class="i20"><use href="#extend"/></svg></button>
                    <button aria-label="Alargar varios"><svg class="i20"><use href="#extendm"/></svg></button>
                    <button aria-label="Borrar"><svg class="i20"><use href="#delete"/></svg></button>
                </div>
            </div>
            <h2>Modificar</h2>
        </section>
        <section class="panel w-view">
            <div class="body center">
                <div class="col">
                    <button aria-label="Ocultar"><svg class="i20"><use href="#bulb"/></svg></button>
                    <button aria-label="Modificar gráficos"><svg class="i20"><use href="#brush"/></svg></button>
                    <button aria-label="Caja de selección"><svg class="i20"><use href="#selbox"/></svg></button>
                </div>
                <div class="col carets">
                    <svg class="car"><use href="#caret"/></svg>
                    <svg class="car"><use href="#caret"/></svg>
                </div>
                <div class="col">
                    <button aria-label="Desplazar elementos"><svg class="i20"><use href="#cube"/></svg></button>
                    <button aria-label="Estilo de línea"><svg class="i20"><use href="#linew"/></svg></button>
                </div>
            </div>
            <h2>Vista</h2>
        </section>
        <section class="panel w-meas">
            <div class="body">
                <div class="grid-one">
                    <button aria-label="Medir"><svg class="i40"><use href="#measure"/></svg><svg class="car"><use href="#caret"/></svg></button>
                    <button aria-label="Cota alineada"><svg class="i40"><use href="#dimal"/></svg><svg class="car"><use href="#caret"/></svg></button>
                </div>
            </div>
            <h2>Medir</h2>
        </section>
        <section class="panel w-create">
            <div class="body">
                <div class="grid-big two">
                    <button aria-label="Crear piezas"><svg class="i40"><use href="#parts"/></svg></button>
                    <button aria-label="Crear grupo"><svg class="i40"><use href="#group"/></svg></button>
                    <button aria-label="Crear montaje"><svg class="i40"><use href="#panels"/></svg></button>
                    <button aria-label="Crear similar"><svg class="i40"><use href="#families"/></svg></button>
                </div>
            </div>
            <h2>Crear</h2>
        </section>
        <section class="panel ctx w-mode">
            <div class="body center"><button class="big"><svg class="i40"><use href="#editfoot"/></svg><span>Editar<br>huella</span></button></div>
            <h2>Modo</h2>
        </section>
        <section class="panel ctx w-shape">
            <div class="body">
                <button class="big sub"><svg class="i40"><use href="#modsub"/></svg><span>Modificar<br>subelementos</span></button>
                <div class="col list">
                    <button><svg class="i20"><use href="#addpt"/></svg>Añadir punto</button>
                    <button><svg class="i20"><use href="#addline"/></svg>Añadir línea divisoria</button>
                    <button><svg class="i20"><use href="#picksup"/></svg>Seleccionar soportes</button>
                </div>
                <button class="big reset" disabled><svg class="i40"><use href="#reset"/></svg><span>Restablecer<br>forma</span></button>
            </div>
            <h2>Edición de formas <svg class="car2"><use href="#caret"/></svg></h2>
        </section>
        <div class="ribbon-rest"></div>
    </div>

    <div class="qat">
        <button aria-label="Abrir"><svg class="i20"><use href="#open"/></svg></button>
        <button aria-label="Guardar"><svg class="i20"><use href="#save"/></svg></button>
        <button aria-label="Sincronizar"><svg class="i20"><use href="#sync"/></svg></button>
        <svg class="car"><use href="#caret"/></svg>
        <button aria-label="Deshacer"><svg class="i20"><use href="#undo"/></svg></button>
        <svg class="car"><use href="#caret"/></svg>
        <button aria-label="Rehacer"><svg class="i20"><use href="#redo"/></svg></button>
        <svg class="car dim"><use href="#caret"/></svg>
        <button aria-label="Imprimir"><svg class="i20"><use href="#print"/></svg></button>
        <button aria-label="PDF"><svg class="i20"><use href="#pdf"/></svg></button>
        <span class="vsep"></span>
        <button class="on" aria-label="Activar controles"><svg class="i20"><use href="#activate"/></svg></button>
        <span class="vsep"></span>
        <button aria-label="Medir"><svg class="i20"><use href="#ruler"/></svg></button>
        <svg class="car"><use href="#caret"/></svg>
        <button aria-label="Cota"><svg class="i20"><use href="#dims"/></svg></button>
        <button aria-label="Etiqueta"><svg class="i20"><use href="#tag"/></svg></button>
        <button class="letter">A</button>
        <span class="vsep"></span>
        <button aria-label="Vista 3D"><svg class="i20"><use href="#home"/></svg></button>
        <svg class="car"><use href="#caret"/></svg>
        <button aria-label="Sección"><svg class="i20"><use href="#section"/></svg></button>
        <button aria-label="Líneas finas"><svg class="i20"><use href="#thin"/></svg></button>
        <span class="vsep"></span>
        <button aria-label="Cerrar ocultas"><svg class="i20"><use href="#closeh"/></svg></button>
        <button aria-label="Cambiar ventanas"><svg class="i20"><use href="#windows"/></svg></button>
        <svg class="car"><use href="#caret"/></svg>
        <button class="more" aria-label="Personalizar"><svg viewBox="0 0 10 9"><path d="M0 0h10v2H0zM0 4h10L5 9z" fill="#fff"/></svg></button>
    </div>

    <div class="options">Modificar | Cubiertas</div>

    <main>
        <aside>
            <section class="props">
                <h3>Propiedades <button aria-label="Cerrar"><svg class="x"><use href="#close"/></svg></button></h3>
                <div class="typesel">
                    <div class="thumb"><i></i><i></i><i></i></div>
                    <p>Cubierta básica<br>A - LM - CUBIERTA</p>
                    <svg class="car2"><use href="#caret"/></svg>
                </div>
                <div class="filter">
                    <label class="combo"><select aria-label="Filtro"><option>Cubiertas (1)</option></select><svg class="chev"><use href="#chev-down"/></svg></label>
                    <button><svg viewBox="0 0 16 16"><path d="M0 1h7v6H0zM9 1h6v6H9zM0 9h7v6H0z" fill="#e4e6ea"/><path d="M9 9h6v6H9z" stroke="#e4e6ea" fill="none"/><path d="M11 12h3" stroke="#e4e6ea"/></svg>Editar tipo</button>
                </div>
                <div class="gridwrap">
                    <table>
                        <colgroup><col class="c-name"><col><col class="c-btn"></colgroup>
                        <tbody>
                            <tr class="head"><th colspan="3">Restricciones <svg><use href="#dblchev"/></svg></th></tr>
                            <tr><td>Nivel base</td><td><input class="focus" type="text" value="TECHO LEVEL" aria-label="Nivel base"></td><td></td></tr>
                            <tr><td>Delimitación ...</td><td><input type="checkbox" checked aria-label="Delimitación"></td><td></td></tr>
                            <tr class="off"><td>Relacionado c...</td><td><input type="checkbox" disabled aria-label="Relacionado"></td><td></td></tr>
                            <tr><td>Desfase base ...</td><td><input type="text" value="0.0000" aria-label="Desfase base"></td><td></td></tr>
                            <tr><td>Nivel del límite</td><td><input type="text" value="Ninguno" aria-label="Nivel del límite"></td><td></td></tr>
                            <tr class="off"><td>Desfase del lí...</td><td><input type="text" value="0.0000" disabled aria-label="Desfase del límite"></td><td></td></tr>
                            <tr class="head"><th colspan="3">Construcción <svg><use href="#dblchev"/></svg></th></tr>
                        </tbody>
                    </table>
                    <div class="vscroll"><svg class="chev"><use href="#chev-up"/></svg><span class="bar short"></span><svg class="chev"><use href="#chev-down"/></svg></div>
                </div>
                <div class="propfoot">
                    <button class="on" aria-label="Agrupar"><svg viewBox="0 0 20 20"><path d="M2 4h9M2 8h9M2 12h9M2 16h9M15 3v14" stroke="#fff" stroke-width="1.500"/><path d="M12 6l3-4 3 4zM12 14l3 4 3-4z" fill="#fff"/></svg></button>
                    <button aria-label="Ascendente"><svg viewBox="0 0 20 20"><text x="2" y="9" class="sort a">A</text><text x="2" y="19" class="sort">Z</text><path d="M15 2v15M12 14l3 4 3-4" stroke="#fff" stroke-width="1.500" fill="none"/></svg></button>
                    <button aria-label="Descendente"><svg viewBox="0 0 20 20"><text x="2" y="9" class="sort">Z</text><text x="2" y="19" class="sort a">A</text><path d="M15 2v15M12 14l3 4 3-4" stroke="#fff" stroke-width="1.500" fill="none"/></svg></button>
                    <button class="apply" disabled>Aplicar</button>
                </div>
            </section>
            <section class="browser">
                <h3>Navegador de proyectos - Efrain xd.... <button aria-label="Cerrar"><svg class="x"><use href="#close"/></svg></button></h3>
                <label class="search"><svg><use href="#magnifier"/></svg><input type="text" placeholder="Buscar"></label>
                <div class="treewrap">
                    <ul class="tree">
                        <li class="l0"><b class="minus"></b><svg class="i20"><use href="#viewroot"/></svg>Vistas (todo)</li>
                        <li class="l1"><b class="plus"></b>Planos estructurales</li>
                        <li class="l1"><b class="minus"></b>Planos de planta</li>
                        <li class="l2"><svg class="i20"><use href="#planview"/></svg>FDL 2</li>
                        <li class="l2"><svg class="i20"><use href="#planview"/></svg>LEVEL 1</li>
                        <li class="l2"><svg class="i20"><use href="#planview"/></svg>LEVEL 2</li>
                        <li class="l2 sel"><svg class="i20"><use href="#planview"/></svg>NIVEL 1</li>
                        <li class="l2"><svg class="i20"><use href="#planview"/></svg>Nivel 1</li>
                        <li class="l2 last"><svg class="i20"><use href="#planview"/></svg>Planimetría general</li>
                        <li class="l1"><b class="minus"></b>Planos de techo</li>
                        <li class="l2"><svg class="i20"><use href="#planview"/></svg>FDL 2</li>
                        <li class="l2"><svg class="i20"><use href="#planview"/></svg>LEVEL 1</li>
                    </ul>
                    <div class="vscroll"><svg class="chev"><use href="#chev-up"/></svg><span class="bar long"></span><svg class="chev"><use href="#chev-down"/></svg></div>
                </div>
            </section>
        </aside>

        <div class="docs">
            <div class="doctabs">
                <button><svg class="i18"><use href="#plan"/></svg>LEVEL 1</button>
                <button><svg class="i18"><use href="#plan"/></svg>LEVEL 2</button>
                <button class="active"><svg class="i20"><use href="#home"/></svg>{3D}<svg class="x"><use href="#close"/></svg></button>
                <button><svg class="i18"><use href="#plan"/></svg>NIVEL 1</button>
                <svg class="tabmenu" viewBox="0 0 10 9"><path d="M0 0h10v2H0zM0 4h10L5 9z" fill="#b4bac6"/></svg>
            </div>
            <div class="viewrow">
                <div class="canvas">
                    <svg class="house" viewBox="0 0 1568 1568" preserveAspectRatio="none">
                        <defs>
                            <linearGradient id="wallL" x1="0" y1="0" x2="0.300" y2="1"><stop offset="0" stop-color="#e6d9c9"/><stop offset="0.600" stop-color="#eadbce"/><stop offset="1" stop-color="#e2d2c2"/></linearGradient>
                            <linearGradient id="wallR" x1="0" y1="0" x2="1" y2="0.400"><stop offset="0" stop-color="#cfc0b3"/><stop offset="0.500" stop-color="#d6c8ba"/><stop offset="1" stop-color="#9f9893"/></linearGradient>
                            <linearGradient id="wallF" x1="0" y1="0" x2="1" y2="0"><stop offset="0" stop-color="#d5c7b7"/><stop offset="0.600" stop-color="#d3c5b6"/><stop offset="1" stop-color="#aca49b"/></linearGradient>
                            <linearGradient id="slab" x1="0" y1="0" x2="1" y2="0"><stop offset="0" stop-color="#5c5e54"/><stop offset="0.500" stop-color="#56584f"/><stop offset="1" stop-color="#64665b"/></linearGradient>
                        </defs>
                        <g stroke="#0c0c0c" stroke-width="3" stroke-linejoin="round">
                            <path d="M85 666l42-12v56l-42-24z" fill="#e3ddd4"/>
                            <path d="M85 668l42 24v18l-42-24z" fill="#7b7873"/>
                            <path d="M93 665v-92l32-16M93 573l32 14M108 672v-90M120 668v-84" fill="none" stroke-width="6"/>
                            <path d="M465 1130L1000 1495l498-292-100-70-400-240-418 165z" fill="url(#slab)"/>
                            <path d="M575 1203l55-2 90 16 30 12 315 228-65 38z" fill="#8b8e7d" stroke="none"/>
                            <path d="M1240 1224l160-90 98 69-57 42z" fill="#84877a" stroke="none"/>
                            <path d="M1330 1172l70-40 98 70-55 42-200-22z" fill="#686a60" stroke="none"/>
                            <path d="M1225 1236l215 10-122 58c-25-20-40-30-93-50z" fill="#8d9080" stroke="none"/>
                            <path d="M465 1130l535 365v15L465 1142z" fill="#585a52"/>
                            <path d="M1000 1495l498-292v16l-498 291z" fill="#75776c"/>
                            <path d="M582 1000l195 110v85L582 1060z" fill="#67675f"/>
                            <path d="M680 1040v82M590 1010v52" fill="none" stroke-width="5"/>
                            <path d="M777 1130l233 140v86L777 1196z" fill="#c8beb0"/>
                            <path d="M1022 1258l205-128v90l-205 125z" fill="#8c8e89"/>
                            <path d="M1075 1230l40 30 110-60M1122 1200v85M1120 1215l105-52M1120 1240l105-52M1190 1165v75" fill="none" stroke-width="4"/>
                            <path d="M1130 1195l95-50v15l-95 50z" fill="#e0e4e4" stroke="none"/>
                            <path d="M1242 1128l156-92v96l-156 90z" fill="#b6b0a6"/>
                            <path d="M1022 1258v90M1240 1130v92" stroke-width="9"/>

                            <path d="M440 857l140-52 430 295 378-215 120 42-526 300z" fill="#dfe0d3"/>
                            <path d="M440 857l140-52 130 90-90 55c-60-20-120-60-180-93z" fill="#b3b2aa" stroke="none"/>
                            <path d="M1060 1110l65-40c60 20 70 30 85 60l-85-10z" fill="#a9a9a0" stroke="none"/>
                            <path d="M1385 855l105 75-40 22-70-50z" fill="#8f8b82" stroke="none"/>
                            <path d="M610 945l390 260" stroke="#aaaca1" stroke-width="7"/>
                            <path d="M437 857l545 375v50L437 908z" fill="#ead8c9"/>
                            <path d="M982 1232l527-307v48L982 1282z" fill="#d5cabc"/>

                            <path d="M124 490l261 175v522L124 1008z" fill="url(#wallL)"/>
                            <path d="M385 665l196-120v260l-133 50-11 2v51l144 99v53l-196 127z" fill="url(#wallR)"/>
                            <path d="M147 827l217 145v100L147 930z" fill="#56564f"/>
                            <path d="M147 827l14 10v70l203 142v23L147 930z" fill="#a9a9a2"/>
                            <path d="M175 870l189 105v25l-60-20-40 20-100-85z" fill="#7b7b74" stroke="none"/>
                            <path d="M275 990l50-32 39 20v36l-30 6z" fill="#15171b"/>
                            <path d="M290 985l50 28M305 972l55 28" stroke="#8c8c8c"/>
                            <path d="M160 905l200 142M161 880l30-10 170 100" fill="none"/>

                            <path d="M590 600l187 95v250L590 800z" fill="#8a8672"/>
                            <path d="M593 770l182 80v85L593 800z" fill="#a59b79" stroke="none"/>
                            <path d="M640 830l80-30 55 60v60z" fill="#777058" stroke="none"/>
                            <path d="M593 665l110 55 70 60v60l-180-90z" fill="#69756f" stroke="none"/>
                            <path d="M700 760l50-15 25 20v60l-50-20z" fill="#90a39e" stroke="none"/>
                            <path d="M620 630l150 90 5 20-30 5-140-85z" fill="#d9d3bf"/>
                            <path d="M595 635l157 105v30L595 665z" fill="#a66e4d"/>
                            <path d="M752 740l22-8v30l-22 8z" fill="#c48a63"/>
                            <path d="M595 725l180 117M683 615v250M770 945v-75h7" fill="none"/>
                            <path d="M582 560v245" stroke-width="8"/><path d="M592 570v232" stroke-width="5"/>
                            <path d="M778 690l232 165v245L778 945z" fill="#e8d9c9"/>
                            <path d="M776 700v245" stroke-width="5"/>

                            <path d="M1022 850l208-120v238l-208 120z" fill="#7e7f79"/>
                            <path d="M1050 835l102-62v177l-25-18-77-57z" fill="#e9eefa" stroke="none"/>
                            <path d="M1032 865l120 82v50l-60 45-65-45z" fill="#8d8f89"/>
                            <path d="M1045 885v40l60 30M1048 970l65-32 15 10v60l-60 5zM1058 965v60M1048 990l10 25 10-15" fill="#93958f"/>
                            <path d="M1025 1000l80 45-80 43z" fill="#7a5647" stroke="none"/>
                            <path d="M1150 775l78-43v235l-78-18z" fill="#6f3f35"/>
                            <path d="M1200 730l25-10v90c-15-5-20-20-25-30z" fill="#56423f" stroke="none"/>
                            <path d="M1122 795v230" fill="none"/>
                            <path d="M1022 1090l208-120" stroke-width="7"/>
                            <path d="M1012 855v245M1024 855v240" stroke-width="5"/>
                            <path d="M1242 720l156-90v250l-156 88z" fill="url(#wallF)"/>
                            <path d="M1232 720v250M1241 718v250" stroke-width="6"/>
                        </g>
                        <!-- railings -->
                        <g fill="none" stroke="#0a0a0a" stroke-width="6">
                            <path d="M448 860v-93l536 366 506-297-102-68v112M440 857l543 363 507-290v-94"/>
                            <path d="M448 860l100-45M983 1133v90" stroke-width="3"/>
                            <path d="M1388 852l103 75" stroke-width="8"/>
                        </g>
                        <!-- selected roof -->
                        <path d="M125 487L32 430v-30l120 80z" fill="#6f7fae"/>
                        <path d="M125 485l260 175 165-90v-28l-165 98L155 485z" fill="#26262c" fill-opacity="0.900"/>
                        <path d="M385 640v25l165-92v-28z" fill="#3b3837"/>
                        <path d="M550 545l470 310v32L550 575z" fill="#4a5c92"/>
                        <path d="M1020 855l400-237v30l-400 240z" fill="#404149"/>
                        <path d="M1185 450l86-48v26l-86 52z" fill="#4a5578"/>
                        <path d="M32 400L610 57l335 230 88-49 238 164-86 48v28l22-4 213 144-400 237-440-307-30-3-165 100z" fill="#7795d3"/>
                        <g stroke="#2c4489" stroke-width="3" stroke-linejoin="round">
                            <path d="M150 490l181-105v235l54 20z" fill="#5a76bd"/>
                            <path d="M331 388l150 100v100l-96 52-54-30z" fill="#6984c9"/>
                            <path d="M331 388v140l70 80z" fill="#5b76be" stroke="none"/>
                            <path d="M245 475l78-45v170l-78-50z" fill="#5367a6"/>
                            <path d="M402 470l72 48v85l-72 38z" fill="#5e68a8"/>
                            <path d="M410 490l56 35M418 480v130" fill="none"/>
                            <path d="M375 398l260-148v130l-150 90z" fill="#566fa8"/>
                            <path d="M635 250l-3-50 140 105-137 77z" fill="#6a86ca"/>
                            <path d="M635 262l45 92-45 26z" fill="#5872b6" stroke="none"/>
                            <path d="M657 205l68-42v85z" fill="#5a70b5"/>
                            <path d="M481 490l304-175v205l-60 40-60 42-80-55-40 10-64 35z" fill="#5370b8"/>
                            <path d="M785 315l100 65v248l-70-55-30-60z" fill="#6580c4"/>
                            <path d="M790 330l95 235v60l-100-110z" fill="#5570b5" stroke="none"/>
                            <path d="M885 380l80-45v255l-80 38z" fill="#677bbd"/>
                            <path d="M725 550l60-35 90 75 90-2 200 45 5 110-240 40-160-90-160-75-70-35z" fill="#566dab"/>
                            <path d="M728 545l60-32 30 25v48l-52 12-38-30zM728 545l40 22 50-28M768 567v30" fill="#5a70ab"/>
                            <circle cx="780" cy="533" r="12" fill="none"/>
                            <path d="M665 600l50-35 150 100-60 50z" fill="#6c86c8"/>
                            <path d="M760 670l110-10-90 35z" fill="#8296cd" stroke="none"/>
                            <path d="M870 660l100-60 85 45-120 55z" fill="#5d75b1"/>
                            <path d="M970 575l50-30 140 85-90 40z" fill="#6b82ba"/>
                            <path d="M970 535l43-22 147 90v30L1013 545l-43 25z" fill="#5f79b8"/>
                            <path d="M1075 560l80 45v25l-80-50z" fill="#4c6199"/>
                            <path d="M890 715l155-80v60l-155 75z" fill="#4c68b2"/>
                            <path d="M1048 625v60l40-10M805 710l70-40v30l-45 30" fill="none" stroke-width="5"/>
                            <path d="M920 775l250-135v108l-150 90z" fill="#4c69b4"/>
                            <path d="M1162 480l205 145-155 90-45 30z" fill="#6a87cd"/>
                            <path d="M1170 645l40 72-40 23z" fill="#4a66b0" stroke="none"/>
                            <path d="M970 580V470l43-22 147 100M1013 450v95M970 350l192 130v160M1162 500L970 600M970 470l190 125" fill="none" stroke-width="4"/>
                        </g>
                        <!-- wall tops under the roof -->
                        <g fill="none" stroke="#7a96d5" stroke-width="13">
                            <path d="M150 484l181-102 150 100 296-170-147-105 75-44 15 9M370 390l265-140M777 310l105 62 80-42M578 556l442 294 205-125M925 772l245-135M1165 485l225 140-165 90"/>
                        </g>
                        <g fill="none" stroke="#30498f" stroke-width="2">
                            <path d="M130 482l201-112 150 100 284-168-145-104 88-48 17 12M331 370l50 30 250-155M777 320l108 60 80-45M965 335v265M885 380v248M785 315v200M481 485v110M331 388v230M1170 474l228 145-170 97"/>
                        </g>
                        <path d="M150 492l235 156 160-96" fill="none" stroke="#14141a" stroke-width="9"/>
                    </svg>

                    <svg class="viewcube" viewBox="80 60 400 340">
                        <ellipse cx="272" cy="262" rx="187" ry="131" fill="#e9e9f5" stroke="#a4a8b0" stroke-width="3" stroke-dasharray="5 3"/>
                        <ellipse cx="272" cy="258" rx="144" ry="99" fill="#e4eff9" stroke="#a4a8b0" stroke-width="3" stroke-dasharray="5 3"/>
                        <ellipse cx="278" cy="254" rx="112" ry="62" fill="#d6e0ec"/>
                        <path d="M170 130l106-54 98 58-6 104-100 67-92-66z" fill="#e9ecf4" stroke="#8b8f96" stroke-width="3"/>
                        <path d="M170 130l98 65v110l-92-66z" fill="#e2e4ea"/><path d="M268 195l106-61-6 104-100 67z" fill="#dcdee4"/>
                        <path d="M170 130l98 65 106-61M268 195v110" fill="none" stroke="#6d7178" stroke-width="3"/>
                        <text x="224" y="116" transform="rotate(31 224 116)">SUPERIOR</text>
                        <text x="180" y="206" transform="rotate(36 180 206)">FRONTAL</text>
                        <text x="280" y="256" transform="rotate(-31 280 256)">DERECHA</text>
                        <text class="dir" x="112" y="352" transform="rotate(-25 112 352)">S</text>
                        <text class="dir" x="386" y="362" transform="rotate(-30 386 362)">E</text>
                        <text class="dir" x="142" y="186">O</text>
                        <text class="dir" x="380" y="188">N</text>
                    </svg>

                    <div class="navbar">
                        <svg viewBox="0 0 35 117"><g fill="none" stroke="#9a9ea6"><circle cx="28" cy="7" r="3.500" stroke-width="1.500"/><path d="M26.500 5.500l3 3M29.500 5.500l-3 3"/><path d="M18 21h10v11a10.500 10.500 0 1 1-10-11z" stroke-width="1.500"/><circle cx="18" cy="32" r="6"/><path d="M11 39l3-3M25 39l-3-3M5 58h26"/><circle cx="28" cy="110" r="3.500" stroke-width="1.500"/><path d="M26 110h4"/></g><path d="M15 51h6l-3 3zM15 93h6l-3 3z" fill="#777c86"/><path d="M10 67h11v11H10z" fill="#a3d19b" stroke="#7b9b78"/><circle cx="21" cy="78" r="3.500" fill="#e9e9f5" stroke="#888"/><path d="M24 80l3 3" stroke="#888" stroke-width="2"/></svg>
                    </div>
                </div>
                <div class="vscroll edge"><svg class="chev"><use href="#chev-up"/></svg><span class="bar centred"></span><svg class="chev"><use href="#chev-down"/></svg></div>
            </div>
            <div class="viewbar">
                <button class="scale">1 : 200</button>
                <button aria-label="Nivel de detalle"><svg class="i20"><use href="#check"/></svg></button>
                <button aria-label="Estilo visual"><svg class="i20"><use href="#style"/></svg></button>
                <button aria-label="Sol"><svg class="i20"><use href="#sun"/></svg></button>
                <button aria-label="Sombras"><svg class="i20"><use href="#shadow"/></svg></button>
                <button aria-label="Renderización"><svg class="i20"><use href="#teapot"/></svg></button>
                <button aria-label="Recortar vista"><svg class="i20"><use href="#cropx"/></svg></button>
                <button aria-label="Región de recorte"><svg class="i20"><use href="#cropb"/></svg></button>
                <button aria-label="Bloquear vista"><svg class="i20"><use href="#lockview"/></svg></button>
                <button aria-label="Ocultar temporal"><svg class="i20"><use href="#glasses"/></svg></button>
                <button aria-label="Mostrar ocultos"><svg class="i16"><use href="#bulb"/></svg></button>
                <button aria-label="Propiedades temporales"><svg class="i20"><use href="#tempprop"/></svg></button>
                <button aria-label="Modelo analítico"><svg class="i20"><use href="#analytic"/></svg></button>
                <button aria-label="Conjuntos"><svg class="i16"><use href="#cube"/></svg></button>
                <button aria-label="Restricciones"><svg class="i20"><use href="#dimb"/></svg></button>
                <div class="hscroll"><svg><use href="#chev-left"/></svg><span class="bar"></span><svg><use href="#chev-right"/></svg></div>
                <svg class="grip" viewBox="0 0 21 22"><path d="M15 8h3v3h-3zM9 13h3v3H9zM15 13h3v3h-3z" fill="#7c8490"/></svg>
            </div>
        </div>
    </main>

    <div class="status">
        <p>Clic para seleccionar, TAB para alternar, CTRL para añadir y MAYÚS para anular una selección.</p>
        <svg class="i20"><use href="#worksets"/></svg>
        <label class="combo ws"><select aria-label="Subproyecto"><option></option></select><svg class="chev"><use href="#chev-down"/></svg></label>
        <svg class="i20"><use href="#editreq"/></svg><span class="muted">:0</span>
        <svg class="i20 gap"><use href="#listw"/></svg>
        <svg class="i20 gap2"><use href="#listg"/></svg>
        <label class="combo base"><select aria-label="Opción de diseño"><option>Modelo base</option></select><svg class="chev"><use href="#chev-down"/></svg></label>
        <div class="seltools">
            <svg class="i20"><use href="#sel-link"/></svg>
            <svg class="i20"><use href="#sel-under"/></svg>
            <svg class="i20"><use href="#sel-pin"/></svg>
            <svg class="i20"><use href="#sel-face"/></svg>
            <svg class="i20"><use href="#sel-drag"/></svg>
            <svg class="i20"><use href="#progress"/></svg>
            <span><svg class="i20"><use href="#funnel"/></svg>:1</span>
        </div>
    </div>

    <footer class="taskbar">
        <div class="apps">
            <button aria-label="Inicio"><svg viewBox="0 0 30 30"><path d="M0 0h14v14H0zM15 0h15v14H15zM0 15h14v15H0zM15 15h15v15H15z" fill="url(#winGrad)"/></svg></button>
            <label class="tsearch"><svg><use href="#magnifier"/></svg><input type="text" placeholder="Buscar">
                <svg class="castle" viewBox="0 0 60 32"><path d="M18 2h9v20h-9zM27 8h22v14H27zM49 12h9v10h-9z" fill="#b9bdb8"/><path d="M33 4h14v5H33z" fill="#4a7ba8"/><path d="M18 1h2v3M22 1h2v3M26 1h1v3M20 8v4M24 8v4M30 12v3M35 12v3M40 12v3M45 12v3M52 15v3" stroke="#5c625e" stroke-width="1.500"/><path d="M0 29c4-10 20-12 32-11 14 1 24 3 28 4l-5 7c-8 3-46 3-55 0z" fill="#5d9a45"/><path d="M26 31l3-12h4l4 12z" fill="#d8cfa8"/><path d="M6 27h14M40 27h12M10 23h10" stroke="#d1632e" stroke-width="2"/></svg>
            </label>
            <button class="running" aria-label="Chrome"><svg viewBox="0 0 30 30"><circle cx="15" cy="15" r="15" fill="#ffcd40"/><path d="M2 8A15 15 0 0 1 28 8H15a7 7 0 0 0-6 4z" fill="#ea4335"/><path d="M2 7.500l7 11.500a7 7 0 0 0 8 3l-4 8A15 15 0 0 1 2 7.500z" fill="#2da94f"/><circle cx="15" cy="15" r="7" fill="#fff"/><circle cx="15" cy="15" r="5.500" fill="#2f7df6"/></svg></button>
            <button class="running current" aria-label="Revit"><svg viewBox="0 0 30 30"><path d="M2 0h26v30H2z" fill="#0f3f96"/><path d="M5 0h23v20H5z" fill="#176bff"/><path d="M2 2l4-2v20l-4 4z" fill="#6f9dfc"/><text x="11" y="17" class="ad">R</text><text x="9" y="28" class="ad-sub">RVT</text></svg></button>
            <button aria-label="D5"><svg viewBox="0 0 30 30"><circle cx="15" cy="15" r="15" fill="url(#d5Grad)"/><path d="M10 21V11l4-3c5 0 7 2 7 6s-2 5-6 5z" stroke="#fff" stroke-width="2.500" fill="none"/></svg></button>
            <button aria-label="AutoCAD"><svg viewBox="0 0 30 30"><path d="M2 0h26v30H2z" fill="#7c0c2e"/><path d="M5 0h23v20H5z" fill="#e5114f"/><path d="M2 2l4-2v20l-4 4z" fill="#f2799a"/><text x="11" y="17" class="ad">A</text><text x="8" y="28" class="ad-sub">CAD</text></svg></button>
            <button aria-label="Civil 3D"><svg viewBox="0 0 30 30"><path d="M2 0h26v30H2z" fill="#63084f"/><path d="M5 0h23v20H5z" fill="#b20e82"/><path d="M2 2l4-2v20l-4 4z" fill="#d977bd"/><text x="11" y="17" class="ad">C</text><text x="9" y="28" class="ad-sub">C3D</text></svg></button>
            <button aria-label="Steam"><svg viewBox="0 0 30 30"><circle cx="15" cy="15" r="14" fill="url(#steamGrad)"/><path d="M1 16l10 5 9-7" stroke="#fff" stroke-width="6" fill="none"/><circle cx="20" cy="11" r="5" fill="#1a3560" stroke="#fff" stroke-width="2"/><circle cx="12" cy="21" r="3.500" fill="#fff"/></svg></button>
            <button aria-label="Illustrator"><svg viewBox="0 0 30 30"><rect x="1" y="1" width="28" height="27" rx="4" fill="#330000"/><text x="7" y="19" class="adobe ai">Ai</text></svg></button>
            <button aria-label="SketchUp"><svg viewBox="0 0 30 30"><path d="M0 0h30v30H0z" fill="#eef3fa"/><path d="M15 26V18l-4-2v-4l9 4v8M15 26l9-6V9l-9-5-9 5v4l5 3M6 13v7l5 3M10 8l5-2 6 4" stroke="#1878ad" stroke-width="2" fill="none"/></svg></button>
            <button aria-label="Discord"><svg viewBox="0 0 30 30"><circle cx="15" cy="15" r="15" fill="#5865f2"/><path d="M9 9c4-2 8-2 12 0 2 3 3 7 3 10l-4 2-2-2h-6l-2 2-4-2c0-3 1-7 3-10z" fill="#fff"/><circle cx="12" cy="15" r="2" fill="#5865f2"/><circle cx="18" cy="15" r="2" fill="#5865f2"/></svg></button>
            <button aria-label="Spotify"><svg viewBox="0 0 30 30"><circle cx="15" cy="15" r="14" fill="#1ed760"/><path d="M7 11c6-2 12-1 17 2M8 15.500c5-1 10-1 14 2M9 20c4-1 8-1 11 1.500" stroke="#111" stroke-width="2.400" fill="none" stroke-linecap="round"/></svg></button>
            <button aria-label="Photoshop"><svg viewBox="0 0 30 30"><rect x="1" y="1" width="28" height="27" rx="4" fill="#001e36"/><text x="6" y="19" class="adobe ps">Ps</text></svg></button>
            <button aria-label="Google Earth"><svg viewBox="0 0 30 30"><circle cx="15" cy="15" r="14" fill="#8b919b"/><path d="M2 10c8-4 16-2 26 9M1 15c9-3 15 0 22 9M8 3c9 0 15 4 20 12" stroke="#f0f0f2" stroke-width="3.500" fill="none"/><path d="M6 22h18l-4 7H9z" fill="#2b2b2b"/><text x="9" y="28" class="ad-sub">Pro</text></svg></button>
            <button aria-label="Global Mapper"><svg viewBox="0 0 30 30"><path d="M2 20c4 8 16 10 25 2-2 6-8 8-13 8C7 30 3 25 2 20z" fill="#0f4468"/><path d="M26 2C14-2 2 4 2 14c0 8 6 12 14 12 6 0 11-3 12-9l-10-3c1 3 3 4 5 4-6 4-14 1-14-5C9 7 16 3 26 2z" fill="#97bb3f"/></svg></button>
        </div>
        <div class="tray">
            <svg class="up" viewBox="0 0 16 10"><path d="M1 9l7-7 7 7" stroke="#fff" stroke-width="2" fill="none"/></svg>
            <svg class="i20" viewBox="0 0 20 20"><rect x="1" y="2" width="18" height="15" rx="3" stroke="#fff" stroke-width="1.500" fill="none"/><path d="M1 11h18M10 11v6" stroke="#fff" stroke-width="1.500"/></svg>
            <span class="lang">ESP<br>LAA</span>
            <svg class="i20" viewBox="0 0 20 20"><path d="M1 8c5-6 13-6 18 0M4 11c4-4 8-4 12 0M7 14c2-2 4-2 6 0" stroke="#fff" stroke-width="1.500" fill="none"/><circle cx="10" cy="17" r="1.500" fill="#fff"/></svg>
            <svg class="i20" viewBox="0 0 20 20"><path d="M1 8h3l5-4v13l-5-4H1zM12 8c1 1 1 4 0 5M14 6c2 2 2 7 0 9M17 4c3 3 3 10 0 13" stroke="#fff" stroke-width="1.400" fill="none"/></svg>
            <svg class="i20" viewBox="0 0 20 20"><rect x="2" y="6" width="15" height="10" rx="2" stroke="#fff" stroke-width="1.500" fill="none"/><path d="M7 8h8v6H4zM18 9h2v4h-2z" fill="#fff"/><path d="M4 1L0 8h3l-1 5 5-7H4z" fill="#fff" stroke="#191919"/></svg>
            <span class="clock">11:30<br>29/04/2025</span>
        </div>
    </footer>
</body>
</html>
```
FILE: styles.css
```css
* {
    box-sizing: border-box;
}

body {
    margin: 0;
    height: 100vh;
    overflow: hidden;
    display: flex;
    flex-direction: column;
    background: #1e2730;
    color: #f0f1f3;
    font-family: "Noto Sans", "Open Sans", sans-serif;
    font-size: 14px;
    line-height: 20px;
}

button, input, select {
    font: inherit;
    color: inherit;
    background: none;
    border: 0;
    padding: 0;
    margin: 0;
}

h1, h2, h3, p, ul {
    margin: 0;
    padding: 0;
    font-size: 14px;
    font-weight: normal;
}

a {
    color: inherit;
    text-decoration: none;
}

svg {
    flex: none;
    display: block;
}

.sprite {
    position: absolute;
    width: 0;
    height: 0;
}

.i16 { width: 16px; height: 16px; }
.i18 { width: 18px; height: 18px; }
.i20 { width: 20px; height: 20px; }
.i40 { width: 40px; height: 40px; }
.car { width: 7px; height: 4px; }
.car2 { width: 10px; height: 6px; }
.x { width: 13px; height: 13px; }
.chev { width: 12px; height: 8px; color: #8b939f; }

.vsep {
    width: 1px;
    height: 24px;
    background: #46505b;
}

/* Title bar */
.titlebar {
    height: 37px;
    flex: none;
    display: flex;
    align-items: center;
    padding-right: 6px;
}

.applogo {
    width: 30px;
    height: 30px;
    margin: 0 8px 2px 0;
}

.logo-letter, .ad {
    font-size: 17px;
    font-weight: bold;
    fill: #fff;
}

.help-mark {
    font-size: 14px;
    font-weight: bold;
    fill: #3455b8;
}

.titlebar h1 {
    flex: 1;
    text-align: center;
    padding: 0 0 11px 655px;
}

.account {
    display: flex;
    align-items: center;
    gap: 12px;
    padding: 0 76px 6px 0;
}

.back { width: 5px; height: 8px; }

.user {
    margin-left: -3px;
    padding-right: 20px;
}

.winbtns {
    display: flex;
    gap: 16px;
    padding-bottom: 4px;
}

.winbtns svg {
    width: 16px;
    height: 16px;
}

/* Ribbon tabs */
.tabs {
    height: 25px;
    flex: none;
    display: flex;
    line-height: 25px;
}

.tabs a {
    padding: 0 12px;
    white-space: nowrap;
}

.tabs .file {
    background: #2178b5;
}

.tabs .context {
    background: #358a00;
}

.collapse {
    display: flex;
    align-items: center;
    gap: 8px;
    padding-left: 30px;
}

.collapse svg:first-child {
    width: 17px;
    height: 10px;
}

/* Ribbon */
.ribbon {
    height: 120px;
    flex: none;
    display: flex;
    background: #394150;
    border-top: 1px solid #454e5b;
}

.panel {
    display: flex;
    flex-direction: column;
    flex: none;
    border-right: 1px solid #303845;
}

.panel .body {
    flex: 1;
    min-height: 0;
    display: flex;
    padding-top: 2px;
}

.panel .center {
    justify-content: center;
}

.panel h2 {
    height: 23px;
    flex: none;
    line-height: 22px;
    display: flex;
    align-items: center;
    justify-content: center;
    gap: 8px;
    white-space: nowrap;
}

.panel button {
    display: flex;
    align-items: center;
    justify-content: center;
}

.w-select { width: 108px; }
.w-props { width: 96px; }
.w-clip { width: 101px; }
.w-geo { width: 189px; }
.w-ctrl { width: 76px; }
.w-mod { width: 299px; }
.w-view { width: 82px; }
.w-meas { width: 70px; }
.w-create { width: 104px; }
.w-mode { width: 57px; }
.w-shape { width: 381px; }

.panel .big {
    flex-direction: column;
    justify-content: flex-start;
    width: 70px;
    height: 88px;
    margin-top: 1px;
    padding-top: 2px;
    line-height: 19px;
    white-space: nowrap;
}

.big span {
    padding-top: 5px;
}

.panel .on, .qat .on {
    background: #37505f;
    border: 1px solid #3f7383;
}

.panel .narrow { width: 53px; }
.panel .sub { width: 102px; }
.panel .reset {
    width: 94px;
    color: #68707d;
    border-left: 1px solid #4a5361;
}

.big .car { margin-top: 4px; }

.panel .stack {
    flex-direction: column;
    align-items: center;
    gap: 3px;
    padding-top: 4px;
}

.wide { width: 47px; height: 42px; }

.col {
    display: flex;
    flex-direction: column;
}

.col button {
    height: 31px;
    width: 30px;
}

.w-clip .col { margin-left: -3px; }

.list {
    width: 108px;
    padding-left: 8px;
}

.list button {
    width: auto;
    gap: 7px;
    justify-content: flex-start;
    white-space: nowrap;
}

.list .car { margin-left: 5px; }
.w-shape .list { width: 184px; padding-left: 2px; }
.midrow { margin-top: 43px; }
.carets { padding: 13px 8px 0 0; gap: 27px; }

.grid-big {
    display: grid;
    grid-template-columns: repeat(4, 49px);
    grid-auto-rows: 45px;
    padding: 1px 0 0 2px;
}

.grid-big.two {
    grid-template-columns: repeat(2, 49px);
}

.grid-small {
    display: grid;
    grid-template-columns: repeat(3, 31px);
    grid-auto-rows: 31px;
    padding-left: 4px;
}

.grid-one {
    display: grid;
    grid-auto-rows: 45px;
    padding: 1px 0 0 7px;
}

.grid-one button { gap: 10px; }

.ctx {
    border-top: 3px solid #358a00;
    margin-top: -1px;
}

.ctx .body { padding-top: 0; }
.ctx h2 { background: #424a4f; }

.ribbon-rest {
    flex: 1;
    background: #424a50;
    border-top: 3px solid #358a00;
    margin-top: -1px;
}

/* Quick access toolbar */
.qat {
    height: 31px;
    flex: none;
    display: flex;
    align-items: center;
    padding-left: 5px;
}

.qat button {
    width: 30px;
    height: 27px;
    display: flex;
    align-items: center;
    justify-content: center;
}

.qat .car { margin: 0 4px; }
.qat .dim { color: #7c838c; }
.qat .vsep { margin: 0 4px; }
.qat .letter { font-size: 20px; font-weight: 600; }
.qat .more svg { width: 10px; height: 9px; }
.qat .more { width: 20px; }

.options {
    height: 35px;
    flex: none;
    padding: 8px 11px 0;
    background: #424a4e;
    border-bottom: 2px solid #4c5566;
}

/* Work area */
main {
    flex: 1;
    min-height: 0;
    display: flex;
}

aside {
    width: 279px;
    flex: none;
    display: flex;
    flex-direction: column;
    background: #2e323b;
    border-right: 4px solid #2a313d;
    padding: 0 2px 3px 2px;
}

aside h3 {
    height: 21px;
    flex: none;
    display: flex;
    justify-content: space-between;
    align-items: center;
    padding: 0 1px 0 2px;
    background: #1e2730;
    white-space: nowrap;
}

aside h3 .x { color: #b4bac2; }

.typesel {
    display: flex;
    align-items: center;
    height: 86px;
    padding: 0 10px 0 4px;
    border: 1px solid #434c5a;
    border-bottom: 0;
    background: #39424f;
    line-height: 20px;
}

.typesel p { flex: 1; padding-left: 7px; }
.typesel .car2 { color: #7d8591; }

.thumb {
    width: 80px;
    background: #fff;
}

.thumb i {
    display: block;
    height: 27px;
}

.thumb i:nth-child(2) {
    background: #e8e8e8;
    border: 1px solid #444;
    border-left: 0;
}

.filter {
    display: flex;
    height: 37px;
    padding-bottom: 5px;
    background: #39424f;
}

.combo {
    display: flex;
    align-items: center;
    border-bottom: 2px solid #5d6776;
}

.combo select {
    flex: 1;
    appearance: none;
    outline: 0;
    color: #d4d7db;
}

.filter .combo { width: 166px; padding: 0 5px 0 4px; }

.filter button {
    display: flex;
    align-items: center;
    gap: 5px;
    padding-left: 5px;
}

.filter button svg { width: 16px; height: 16px; }

.gridwrap {
    display: flex;
    background: #2e323b;
}

.gridwrap table {
    width: 249px;
    border-collapse: collapse;
    table-layout: fixed;
    background: #39424f;
}

.c-name { width: 117px; }
.c-btn { width: 15px; }

.gridwrap td {
    height: 24px;
    padding: 0;
    border: 1px solid #48515f;
    border-left: 0;
    line-height: 21px;
    white-space: nowrap;
}

.gridwrap td:first-child { padding-left: 10px; }
.gridwrap td input[type="text"] { width: 100%; height: 22px; padding-left: 2px; display: block; }
.gridwrap td input.focus { border: 1px solid #c9ccd0; padding-left: 1px; }
.off td, .off input { color: #7d8591; }

.gridwrap input[type="checkbox"] {
    appearance: none;
    display: block;
    width: 14px;
    height: 14px;
    margin: 0 4px;
    border: 1px solid #5d6776;
}

.gridwrap input:checked { background: #a0a8b5; }

.gridwrap input:checked::before {
    content: "✓";
    display: block;
    color: #1e2730;
    font-size: 12px;
    font-weight: bold;
    line-height: 12px;
    text-align: center;
}

.gridwrap th {
    height: 23px;
    padding: 0 7px 0 2px;
    background: #1e2730;
    font-weight: bold;
    text-align: left;
}

.gridwrap th svg {
    float: right;
    width: 8px;
    height: 10px;
    margin-top: 3px;
}

.vscroll {
    width: 23px;
    display: flex;
    flex-direction: column;
    align-items: center;
    justify-content: space-between;
    padding: 6px 0;
    background: #2e323b;
}

.bar {
    width: 10px;
    border-radius: 5px;
    background: #74809a;
}

.bar.short { height: 39px; margin: 7px 0 auto; }
.bar.long { height: 84px; margin: 14px 0 auto; }
.bar.centred { height: 20px; margin: auto 0; }

.propfoot {
    display: flex;
    gap: 5px;
    padding: 5px 3px 5px 2px;
    background: #2e323b;
    border-bottom: 2px solid #4c5566;
}

.propfoot button {
    width: 24px;
    height: 25px;
    padding: 2px;
    border-radius: 2px;
    background: #363c47;
}

.propfoot .on { background: #31708f; }

.propfoot .apply {
    width: 83px;
    height: 24px;
    margin-left: auto;
    border: 1px solid #4c5460;
    border-radius: 4px;
    background: none;
    color: #6b7380;
    line-height: 16px;
}

.sort { font-size: 9px; fill: #e6e6e6; }
.sort.a { fill: #7fc4fb; }

.browser {
    flex: 1;
    min-height: 0;
    display: flex;
    flex-direction: column;
    background: #39424f;
}

.search {
    display: flex;
    align-items: center;
    gap: 12px;
    height: 29px;
    margin: 11px 10px;
    padding-left: 10px;
    background: #2a333d;
    color: #a9afb8;
    flex: none;
}

.search svg { width: 19px; height: 19px; }
.search input { flex: 1; min-width: 0; }
input::placeholder { color: #9097a1; opacity: 1; }

.treewrap {
    flex: 1;
    min-height: 0;
    display: flex;
}

.tree {
    flex: 1;
    list-style: none;
    overflow: hidden;
}

.tree li {
    display: flex;
    align-items: center;
    gap: 4px;
    height: 25px;
    white-space: nowrap;
    background-repeat: no-repeat;
}

.l0 { padding-left: 6px; }
.l0 svg { margin: 0 1px 0 8px; }

.l1 {
    padding-left: 26px;
    background-image: repeating-linear-gradient(#69727f 0 3px, transparent 3px 5px), repeating-linear-gradient(90deg, #69727f 0 3px, transparent 3px 5px);
    background-position: 10px 0, 10px 12px;
    background-size: 1px 100%, 12px 1px;
}

.l1 b { margin-right: 7px; }

.l2 {
    padding-left: 68px;
    background-image: repeating-linear-gradient(#69727f 0 3px, transparent 3px 5px), repeating-linear-gradient(#69727f 0 3px, transparent 3px 5px), repeating-linear-gradient(90deg, #69727f 0 3px, transparent 3px 5px);
    background-position: 10px 0, 30px 0, 30px 12px;
    background-size: 1px 100%, 1px 100%, 30px 1px;
}

.tree .last { background-size: 1px 100%, 1px 50%, 30px 1px; }

.tree .sel {
    background-color: #303440;
    outline: 1px solid #454b58;
    outline-offset: -1px;
}

.minus, .plus {
    width: 10px;
    height: 10px;
    background: linear-gradient(#b0b6bf, #b0b6bf) 0 4px / 10px 2px no-repeat;
}

.plus {
    background: linear-gradient(#b0b6bf, #b0b6bf) 0 4px / 10px 2px no-repeat, linear-gradient(#b0b6bf, #b0b6bf) 4px 0 / 2px 10px no-repeat;
}

.docs {
    flex: 1;
    min-width: 0;
    display: flex;
    flex-direction: column;
}

.doctabs {
    height: 27px;
    flex: none;
    display: flex;
    align-items: center;
    background: #424b5f;
    border-bottom: 2px solid #1e2730;
    padding-right: 4px;
}

.doctabs button {
    width: 160px;
    height: 25px;
    display: flex;
    align-items: center;
    gap: 9px;
    padding-left: 5px;
}

.doctabs .active {
    background: #1e2730;
    font-weight: bold;
}

.doctabs .x { margin: 0 8px 0 auto; color: #b4bac2; }
.tabmenu { width: 10px; height: 9px; margin-left: auto; }

.viewrow {
    flex: 1;
    min-height: 0;
    display: flex;
}

.canvas {
    flex: 1;
    position: relative;
    overflow: hidden;
    background: linear-gradient(#e3eefa, #e8f1fb 44%, #ecedfb 48%, #ebeefc 56%, #e6f3ff 57%, #ebf4ff 78%, #f1f4fe);
}

.house {
    position: absolute;
    left: 451px;
    top: 65px;
    width: 550px;
    height: 540px;
}

.viewcube {
    position: absolute;
    right: 18px;
    top: 45px;
    width: 133px;
    height: 113px;
}

.viewcube text { font-size: 22px; fill: #7c8088; }
.viewcube .dir { font-size: 36px; font-weight: bold; fill: #d8d8de; stroke: #9a9a9a; stroke-width: 2; }

.navbar {
    position: absolute;
    right: 1px;
    top: 166px;
    border: 2px solid #a9adb6;
    border-radius: 6px;
    background: #e9e9f5;
}

.navbar svg { width: 31px; height: 113px; }

.edge {
    width: 21px;
    background: #2d3741;
}

.viewbar {
    height: 24px;
    flex: none;
    display: flex;
    align-items: center;
    background: #2d3741;
    border-bottom: 2px solid #242d37;
}

.viewbar button {
    width: 30px;
    height: 22px;
    display: flex;
    align-items: center;
    justify-content: center;
    background: #394150;
}

.viewbar .scale {
    width: 91px;
    padding-left: 4px;
    font-size: 13px;
}

.hscroll {
    flex: 1;
    display: flex;
    align-items: center;
    justify-content: space-between;
    padding: 0 6px 0 5px;
    color: #8b939f;
}

.hscroll svg { width: 8px; height: 12px; }
.hscroll .bar { width: 21px; height: 10px; }
.grip { width: 21px; height: 22px; }

/* Status bar */
.status {
    height: 33px;
    flex: none;
    display: flex;
    align-items: center;
    background: #394150;
    border-top: 1px solid #4a5361;
    border-bottom: 2px solid #2b313a;
}

.status p { width: 682px; padding: 3px 0 0 1px; white-space: nowrap; }
.status .combo { height: 30px; padding-top: 3px; border-bottom: 1px solid #5d6776; }
.status .combo select { color: #8b939f; }
.status .ws { width: 260px; margin: 0 7px 0 6px; padding-right: 6px; }
.status .base { width: 261px; margin-left: 5px; padding-left: 5px; padding-right: 6px; }
.muted { color: #a9afb8; padding-top: 3px; }
.gap { margin-left: 28px; }
.gap2 { margin-left: 10px; }

.seltools {
    margin-left: auto;
    display: flex;
    gap: 10px;
    padding-right: 76px;
}

.seltools span { display: flex; }

/* Windows taskbar */
.taskbar {
    height: 58px;
    flex: none;
    display: flex;
    align-items: center;
    justify-content: space-between;
    background: #191919;
    padding-left: 436px;
}

.apps { display: flex; align-items: center; }

.apps button {
    width: 50px;
    height: 50px;
    margin-right: 5px;
    padding: 9px 0 0;
    border-radius: 5px;
}

.apps button svg { width: 30px; height: 30px; margin: 0 auto; }

.apps button::after {
    content: "";
    display: block;
    width: 7px;
    height: 4px;
    margin: 5px auto 2px;
    border-radius: 2px;
}

.apps .running::after { background: #9a9a9a; }
.apps .current { background: #2b2b2b; }
.apps .current::after { width: 21px; background: #4cc2ff; }

.tsearch {
    display: flex;
    align-items: center;
    gap: 13px;
    width: 274px;
    height: 40px;
    margin: 0 6px 0 3px;
    padding: 0 4px 0 15px;
    border-radius: 20px;
    border-top: 1px solid #555;
    background: #3b3b3b;
    color: #d8d8d8;
}

.tsearch svg { width: 19px; height: 19px; }
.tsearch input { flex: 1; min-width: 0; font-size: 15px; }
.tsearch input::placeholder { color: #cfcfcf; }
.tsearch .castle { width: 60px; height: 32px; }

.ad-sub { font-size: 7px; font-weight: bold; fill: #fff; }
.adobe { font-size: 16px; font-weight: bold; }
.ai { fill: #ff9a00; }
.ps { fill: #31a8ff; }

.tray {
    display: flex;
    align-items: center;
    gap: 10px;
    padding-right: 23px;
    line-height: 20px;
}

.up { width: 16px; height: 10px; margin-right: 13px; }
.lang { text-align: center; margin: 0 14px 0 15px; }
.clock { text-align: right; margin-left: 11px; }
```
